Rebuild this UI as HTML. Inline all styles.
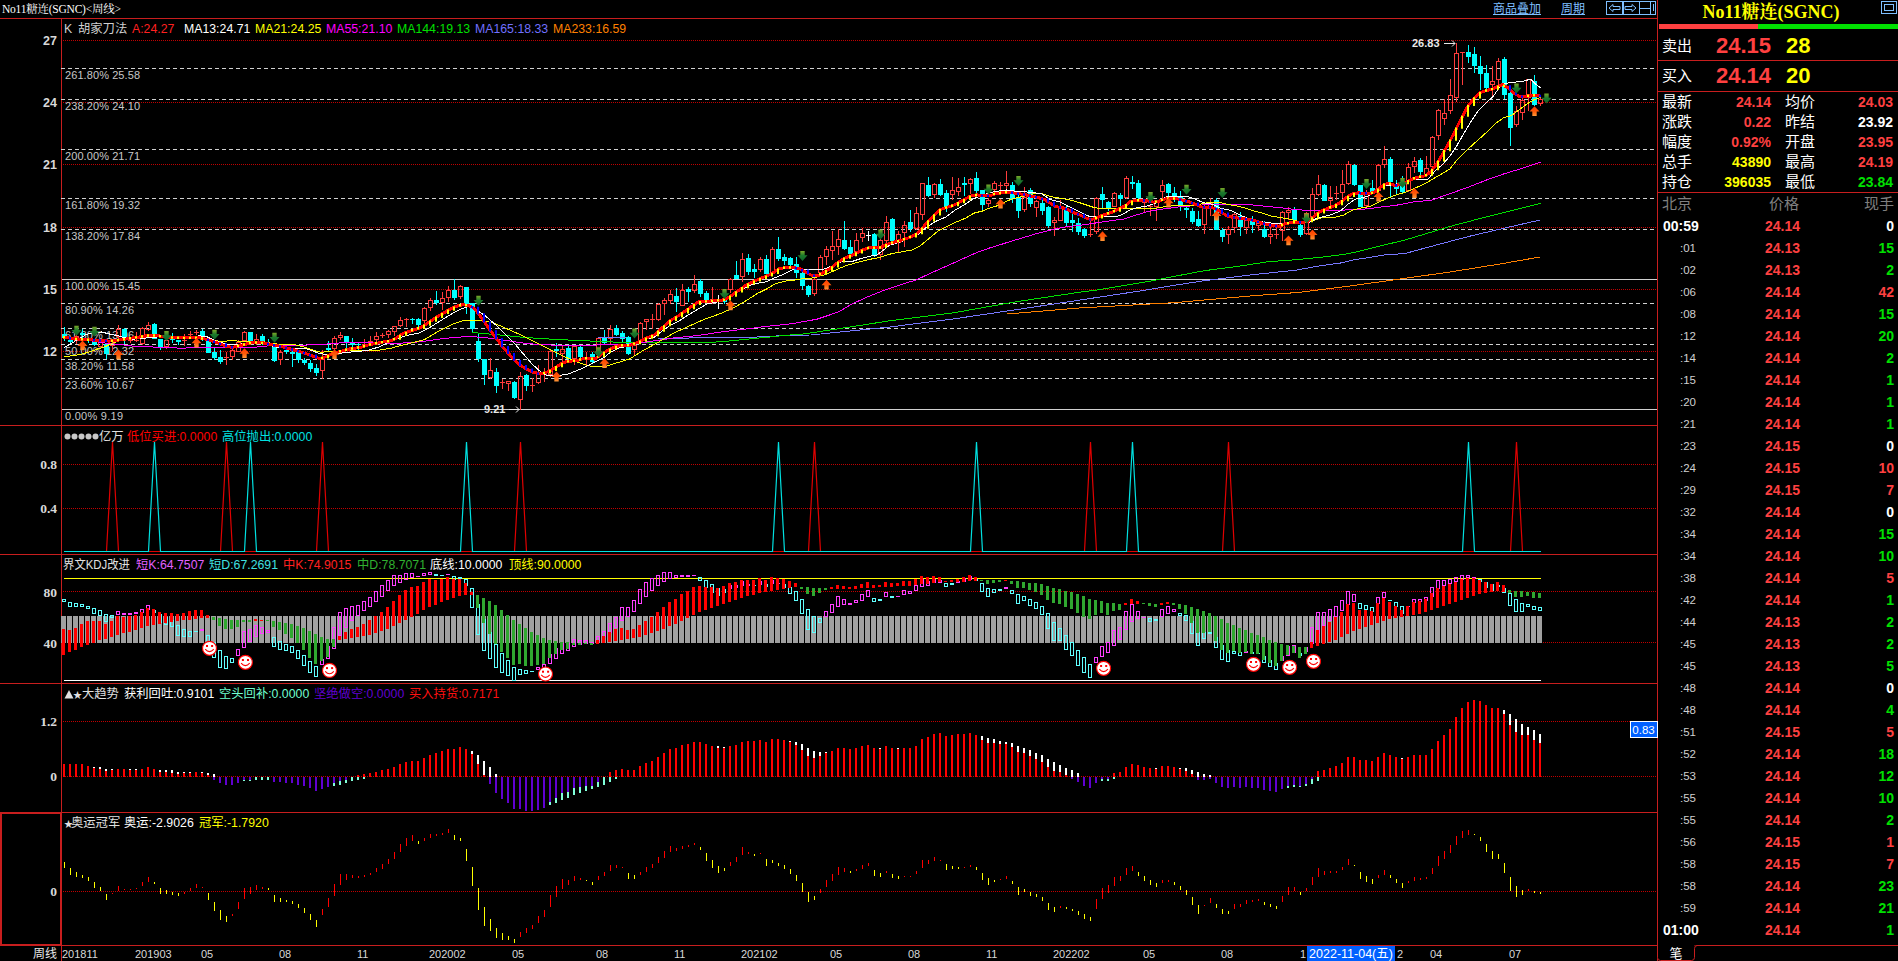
<!DOCTYPE html><html><head><meta charset="utf-8"><title>No11糖连(SGNC)</title><style>
html,body{margin:0;padding:0;background:#000;overflow:hidden}
body{width:1898px;height:961px;position:relative;font-family:"Liberation Sans","Noto Sans CJK SC",sans-serif;color:#fff}
svg{position:absolute;left:0;top:0}
text{font-family:"Liberation Sans","Noto Sans CJK SC",sans-serif}
.t{position:absolute;white-space:nowrap;line-height:1}
</style></head><body>
<svg width="1898" height="961" viewBox="0 0 1898 961">
<rect x="0" y="0" width="1898" height="961" fill="#000"/>
<line x1="0" y1="18.5" x2="1657" y2="18.5" stroke="#c81e1e" stroke-width="1" shape-rendering="crispEdges"/>
<line x1="0" y1="425.5" x2="1657" y2="425.5" stroke="#c81e1e" stroke-width="1" shape-rendering="crispEdges"/>
<line x1="0" y1="554.5" x2="1657" y2="554.5" stroke="#c81e1e" stroke-width="1" shape-rendering="crispEdges"/>
<line x1="0" y1="683.5" x2="1657" y2="683.5" stroke="#c81e1e" stroke-width="1" shape-rendering="crispEdges"/>
<line x1="0" y1="812.5" x2="1657" y2="812.5" stroke="#c81e1e" stroke-width="1" shape-rendering="crispEdges"/>
<line x1="0" y1="945.5" x2="1657" y2="945.5" stroke="#c81e1e" stroke-width="1" shape-rendering="crispEdges"/>
<line x1="61.5" y1="18" x2="61.5" y2="961" stroke="#c81e1e" stroke-width="1" shape-rendering="crispEdges"/>
<line x1="1657.5" y1="0" x2="1657.5" y2="961" stroke="#c81e1e" stroke-width="1" shape-rendering="crispEdges"/>
<text x="2" y="13" font-size="11.5" fill="#fff" text-anchor="start" font-weight="normal" style="font-family:'Liberation Serif','Noto Serif CJK SC',serif" textLength="119" lengthAdjust="spacing">No11糖连(SGNC)&lt;周线&gt;</text>
<text x="1493" y="13" font-size="12" fill="#7fbfff" text-anchor="start" font-weight="normal">商品叠加</text>
<text x="1561" y="13" font-size="12" fill="#7fbfff" text-anchor="start" font-weight="normal">周期</text>
<line x1="1493" y1="14.5" x2="1541" y2="14.5" stroke="#7fbfff" stroke-width="1" shape-rendering="crispEdges"/>
<line x1="1561" y1="14.5" x2="1585" y2="14.5" stroke="#7fbfff" stroke-width="1" shape-rendering="crispEdges"/>
<rect x="1606.5" y="1.5" width="16" height="13" fill="none" stroke="#7fbfff" stroke-width="1" shape-rendering="crispEdges"/>
<rect x="1623.0" y="1.5" width="16" height="13" fill="none" stroke="#7fbfff" stroke-width="1" shape-rendering="crispEdges"/>
<rect x="1639.5" y="1.5" width="16" height="13" fill="none" stroke="#7fbfff" stroke-width="1" shape-rendering="crispEdges"/>
<path d="M1609 8 l4 -3.5 v2 h7 v3 h-7 v2 z" fill="none" stroke="#7fbfff" stroke-width="1"/>
<path d="M1636 8 l-4 -3.5 v2 h-7 v3 h7 v2 z" fill="none" stroke="#7fbfff" stroke-width="1"/>
<path d="M1640 8.5 h10 M1650.5 2 v12 M1653.5 4 v7" fill="none" stroke="#7fbfff" stroke-width="1" shape-rendering="crispEdges"/>
<line x1="63" y1="40.5" x2="1657" y2="40.5" stroke="#c00000" stroke-width="1" stroke-dasharray="1 1" shape-rendering="crispEdges"/>
<text x="57" y="44.5" font-size="12.5" fill="#d8d8d8" text-anchor="end" font-weight="bold">27</text>
<line x1="63" y1="102.5" x2="1657" y2="102.5" stroke="#c00000" stroke-width="1" stroke-dasharray="1 1" shape-rendering="crispEdges"/>
<text x="57" y="106.5" font-size="12.5" fill="#d8d8d8" text-anchor="end" font-weight="bold">24</text>
<line x1="63" y1="164.5" x2="1657" y2="164.5" stroke="#c00000" stroke-width="1" stroke-dasharray="1 1" shape-rendering="crispEdges"/>
<text x="57" y="168.5" font-size="12.5" fill="#d8d8d8" text-anchor="end" font-weight="bold">21</text>
<line x1="63" y1="227.5" x2="1657" y2="227.5" stroke="#c00000" stroke-width="1" stroke-dasharray="1 1" shape-rendering="crispEdges"/>
<text x="57" y="231.5" font-size="12.5" fill="#d8d8d8" text-anchor="end" font-weight="bold">18</text>
<line x1="63" y1="289.5" x2="1657" y2="289.5" stroke="#c00000" stroke-width="1" stroke-dasharray="1 1" shape-rendering="crispEdges"/>
<text x="57" y="293.5" font-size="12.5" fill="#d8d8d8" text-anchor="end" font-weight="bold">15</text>
<line x1="63" y1="351.5" x2="1657" y2="351.5" stroke="#c00000" stroke-width="1" stroke-dasharray="1 1" shape-rendering="crispEdges"/>
<text x="57" y="355.5" font-size="12.5" fill="#d8d8d8" text-anchor="end" font-weight="bold">12</text>
<line x1="61" y1="68.5" x2="1657" y2="68.5" stroke="#d0d0d0" stroke-width="1" stroke-dasharray="4 3" shape-rendering="crispEdges"/>
<text x="65" y="79" font-size="11" fill="#c8c8c8" text-anchor="start" font-weight="normal" textLength="75" lengthAdjust="spacing">261.80% 25.58</text>
<line x1="61" y1="99.5" x2="1657" y2="99.5" stroke="#d0d0d0" stroke-width="1" stroke-dasharray="4 3" shape-rendering="crispEdges"/>
<text x="65" y="110" font-size="11" fill="#c8c8c8" text-anchor="start" font-weight="normal" textLength="75" lengthAdjust="spacing">238.20% 24.10</text>
<line x1="61" y1="149.5" x2="1657" y2="149.5" stroke="#d0d0d0" stroke-width="1" stroke-dasharray="4 3" shape-rendering="crispEdges"/>
<text x="65" y="160" font-size="11" fill="#c8c8c8" text-anchor="start" font-weight="normal" textLength="75" lengthAdjust="spacing">200.00% 21.71</text>
<line x1="61" y1="198.5" x2="1657" y2="198.5" stroke="#d0d0d0" stroke-width="1" stroke-dasharray="4 3" shape-rendering="crispEdges"/>
<text x="65" y="209" font-size="11" fill="#c8c8c8" text-anchor="start" font-weight="normal" textLength="75" lengthAdjust="spacing">161.80% 19.32</text>
<line x1="61" y1="229.5" x2="1657" y2="229.5" stroke="#d0d0d0" stroke-width="1" stroke-dasharray="4 3" shape-rendering="crispEdges"/>
<text x="65" y="240" font-size="11" fill="#c8c8c8" text-anchor="start" font-weight="normal" textLength="75" lengthAdjust="spacing">138.20% 17.84</text>
<line x1="62" y1="279.5" x2="1657" y2="279.5" stroke="#d0d0d0" stroke-width="1" shape-rendering="crispEdges"/>
<text x="65" y="290" font-size="11" fill="#c8c8c8" text-anchor="start" font-weight="normal" textLength="75" lengthAdjust="spacing">100.00% 15.45</text>
<line x1="61" y1="303.5" x2="1657" y2="303.5" stroke="#d0d0d0" stroke-width="1" stroke-dasharray="4 3" shape-rendering="crispEdges"/>
<text x="65" y="314" font-size="11" fill="#c8c8c8" text-anchor="start" font-weight="normal" textLength="69" lengthAdjust="spacing">80.90% 14.26</text>
<line x1="61" y1="328.5" x2="1657" y2="328.5" stroke="#d0d0d0" stroke-width="1" stroke-dasharray="4 3" shape-rendering="crispEdges"/>
<text x="65" y="339" font-size="11" fill="#c8c8c8" text-anchor="start" font-weight="normal" textLength="69" lengthAdjust="spacing">61.80% 13.06</text>
<line x1="61" y1="344.5" x2="1657" y2="344.5" stroke="#d0d0d0" stroke-width="1" stroke-dasharray="4 3" shape-rendering="crispEdges"/>
<text x="65" y="355" font-size="11" fill="#c8c8c8" text-anchor="start" font-weight="normal" textLength="69" lengthAdjust="spacing">50.00% 12.32</text>
<line x1="61" y1="359.5" x2="1657" y2="359.5" stroke="#d0d0d0" stroke-width="1" stroke-dasharray="4 3" shape-rendering="crispEdges"/>
<text x="65" y="370" font-size="11" fill="#c8c8c8" text-anchor="start" font-weight="normal" textLength="69" lengthAdjust="spacing">38.20% 11.58</text>
<line x1="61" y1="378.5" x2="1657" y2="378.5" stroke="#d0d0d0" stroke-width="1" stroke-dasharray="4 3" shape-rendering="crispEdges"/>
<text x="65" y="389" font-size="11" fill="#c8c8c8" text-anchor="start" font-weight="normal" textLength="69" lengthAdjust="spacing">23.60% 10.67</text>
<line x1="62" y1="409.5" x2="1657" y2="409.5" stroke="#d0d0d0" stroke-width="1" shape-rendering="crispEdges"/>
<text x="65" y="420" font-size="11" fill="#c8c8c8" text-anchor="start" font-weight="normal" textLength="58" lengthAdjust="spacing">0.00% 9.19</text>
<text x="64" y="33" font-size="12.3" fill="#d0d0d0" text-anchor="start" font-weight="normal">K</text>
<text x="78" y="33" font-size="12.3" fill="#d0d0d0" text-anchor="start" font-weight="normal">胡家刀法</text>
<text x="132" y="33" font-size="12.3" fill="#ff2020" text-anchor="start" font-weight="normal">A:24.27</text>
<text x="184" y="33" font-size="12.3" fill="#ffffff" text-anchor="start" font-weight="normal">MA13:24.71</text>
<text x="255" y="33" font-size="12.3" fill="#ffff00" text-anchor="start" font-weight="normal">MA21:24.25</text>
<text x="326" y="33" font-size="12.3" fill="#ff00ff" text-anchor="start" font-weight="normal">MA55:21.10</text>
<text x="397" y="33" font-size="12.3" fill="#00e000" text-anchor="start" font-weight="normal">MA144:19.13</text>
<text x="475" y="33" font-size="12.3" fill="#7070ff" text-anchor="start" font-weight="normal">MA165:18.33</text>
<text x="553" y="33" font-size="12.3" fill="#ff8000" text-anchor="start" font-weight="normal">MA233:16.59</text>
<rect x="62" y="334" width="5" height="4" fill="#00ffff" shape-rendering="crispEdges"/>
<rect x="68" y="340" width="5" height="2" fill="#00ffff" shape-rendering="crispEdges"/>
<rect x="80" y="333" width="5" height="2" fill="#00ffff" shape-rendering="crispEdges"/>
<rect x="86" y="340" width="5" height="1" fill="#00ffff" shape-rendering="crispEdges"/>
<rect x="92" y="340" width="5" height="5" fill="#00ffff" shape-rendering="crispEdges"/>
<rect x="104" y="344" width="5" height="10" fill="#00ffff" shape-rendering="crispEdges"/>
<rect x="122" y="329" width="5" height="10" fill="#00ffff" shape-rendering="crispEdges"/>
<rect x="152" y="324" width="5" height="15" fill="#00ffff" shape-rendering="crispEdges"/>
<rect x="158" y="339" width="5" height="8" fill="#00ffff" shape-rendering="crispEdges"/>
<rect x="170" y="338" width="5" height="2" fill="#00ffff" shape-rendering="crispEdges"/>
<rect x="176" y="340" width="5" height="2" fill="#00ffff" shape-rendering="crispEdges"/>
<rect x="200" y="331" width="5" height="5" fill="#00ffff" shape-rendering="crispEdges"/>
<rect x="206" y="340" width="5" height="13" fill="#00ffff" shape-rendering="crispEdges"/>
<rect x="212" y="352" width="5" height="6" fill="#00ffff" shape-rendering="crispEdges"/>
<rect x="218" y="357" width="5" height="5" fill="#00ffff" shape-rendering="crispEdges"/>
<rect x="248" y="332" width="5" height="10" fill="#00ffff" shape-rendering="crispEdges"/>
<rect x="260" y="336" width="5" height="6" fill="#00ffff" shape-rendering="crispEdges"/>
<rect x="266" y="343" width="5" height="1" fill="#00ffff" shape-rendering="crispEdges"/>
<rect x="272" y="347" width="5" height="14" fill="#00ffff" shape-rendering="crispEdges"/>
<rect x="284" y="350" width="5" height="2" fill="#00ffff" shape-rendering="crispEdges"/>
<rect x="290" y="352" width="5" height="2" fill="#00ffff" shape-rendering="crispEdges"/>
<rect x="296" y="352" width="5" height="8" fill="#00ffff" shape-rendering="crispEdges"/>
<rect x="302" y="360" width="5" height="3" fill="#00ffff" shape-rendering="crispEdges"/>
<rect x="308" y="363" width="5" height="6" fill="#00ffff" shape-rendering="crispEdges"/>
<rect x="314" y="368" width="5" height="5" fill="#00ffff" shape-rendering="crispEdges"/>
<rect x="326" y="348" width="5" height="2" fill="#00ffff" shape-rendering="crispEdges"/>
<rect x="344" y="336" width="5" height="6" fill="#00ffff" shape-rendering="crispEdges"/>
<rect x="350" y="343" width="5" height="2" fill="#00ffff" shape-rendering="crispEdges"/>
<rect x="356" y="344" width="5" height="1" fill="#00ffff" shape-rendering="crispEdges"/>
<rect x="410" y="319" width="5" height="1" fill="#00ffff" shape-rendering="crispEdges"/>
<rect x="416" y="319" width="5" height="6" fill="#00ffff" shape-rendering="crispEdges"/>
<rect x="434" y="300" width="5" height="3" fill="#00ffff" shape-rendering="crispEdges"/>
<rect x="452" y="290" width="5" height="8" fill="#00ffff" shape-rendering="crispEdges"/>
<rect x="464" y="287" width="5" height="17" fill="#00ffff" shape-rendering="crispEdges"/>
<rect x="470" y="303" width="5" height="26" fill="#00ffff" shape-rendering="crispEdges"/>
<rect x="476" y="341" width="5" height="18" fill="#00ffff" shape-rendering="crispEdges"/>
<rect x="482" y="359" width="5" height="16" fill="#00ffff" shape-rendering="crispEdges"/>
<rect x="494" y="372" width="5" height="14" fill="#00ffff" shape-rendering="crispEdges"/>
<rect x="512" y="382" width="5" height="16" fill="#00ffff" shape-rendering="crispEdges"/>
<rect x="524" y="375" width="5" height="11" fill="#00ffff" shape-rendering="crispEdges"/>
<rect x="554" y="349" width="5" height="2" fill="#00ffff" shape-rendering="crispEdges"/>
<rect x="566" y="348" width="5" height="11" fill="#00ffff" shape-rendering="crispEdges"/>
<rect x="578" y="347" width="5" height="10" fill="#00ffff" shape-rendering="crispEdges"/>
<rect x="590" y="354" width="5" height="8" fill="#00ffff" shape-rendering="crispEdges"/>
<rect x="602" y="337" width="5" height="6" fill="#00ffff" shape-rendering="crispEdges"/>
<rect x="614" y="328" width="5" height="7" fill="#00ffff" shape-rendering="crispEdges"/>
<rect x="620" y="333" width="5" height="6" fill="#00ffff" shape-rendering="crispEdges"/>
<rect x="626" y="337" width="5" height="17" fill="#00ffff" shape-rendering="crispEdges"/>
<rect x="674" y="296" width="5" height="6" fill="#00ffff" shape-rendering="crispEdges"/>
<rect x="686" y="289" width="5" height="3" fill="#00ffff" shape-rendering="crispEdges"/>
<rect x="698" y="281" width="5" height="13" fill="#00ffff" shape-rendering="crispEdges"/>
<rect x="704" y="293" width="5" height="7" fill="#00ffff" shape-rendering="crispEdges"/>
<rect x="722" y="300" width="5" height="2" fill="#00ffff" shape-rendering="crispEdges"/>
<rect x="734" y="275" width="5" height="4" fill="#00ffff" shape-rendering="crispEdges"/>
<rect x="746" y="258" width="5" height="14" fill="#00ffff" shape-rendering="crispEdges"/>
<rect x="752" y="269" width="5" height="3" fill="#00ffff" shape-rendering="crispEdges"/>
<rect x="764" y="259" width="5" height="15" fill="#00ffff" shape-rendering="crispEdges"/>
<rect x="776" y="249" width="5" height="10" fill="#00ffff" shape-rendering="crispEdges"/>
<rect x="782" y="257" width="5" height="4" fill="#00ffff" shape-rendering="crispEdges"/>
<rect x="788" y="258" width="5" height="7" fill="#00ffff" shape-rendering="crispEdges"/>
<rect x="794" y="264" width="5" height="9" fill="#00ffff" shape-rendering="crispEdges"/>
<rect x="800" y="273" width="5" height="13" fill="#00ffff" shape-rendering="crispEdges"/>
<rect x="806" y="286" width="5" height="9" fill="#00ffff" shape-rendering="crispEdges"/>
<rect x="842" y="240" width="5" height="9" fill="#00ffff" shape-rendering="crispEdges"/>
<rect x="848" y="247" width="5" height="7" fill="#00ffff" shape-rendering="crispEdges"/>
<rect x="872" y="234" width="5" height="22" fill="#00ffff" shape-rendering="crispEdges"/>
<rect x="890" y="219" width="5" height="22" fill="#00ffff" shape-rendering="crispEdges"/>
<rect x="908" y="222" width="5" height="7" fill="#00ffff" shape-rendering="crispEdges"/>
<rect x="926" y="185" width="5" height="11" fill="#00ffff" shape-rendering="crispEdges"/>
<rect x="938" y="184" width="5" height="11" fill="#00ffff" shape-rendering="crispEdges"/>
<rect x="944" y="193" width="5" height="15" fill="#00ffff" shape-rendering="crispEdges"/>
<rect x="962" y="183" width="5" height="2" fill="#00ffff" shape-rendering="crispEdges"/>
<rect x="974" y="178" width="5" height="13" fill="#00ffff" shape-rendering="crispEdges"/>
<rect x="980" y="190" width="5" height="15" fill="#00ffff" shape-rendering="crispEdges"/>
<rect x="1010" y="185" width="5" height="14" fill="#00ffff" shape-rendering="crispEdges"/>
<rect x="1016" y="197" width="5" height="14" fill="#00ffff" shape-rendering="crispEdges"/>
<rect x="1028" y="190" width="5" height="14" fill="#00ffff" shape-rendering="crispEdges"/>
<rect x="1040" y="203" width="5" height="8" fill="#00ffff" shape-rendering="crispEdges"/>
<rect x="1046" y="207" width="5" height="19" fill="#00ffff" shape-rendering="crispEdges"/>
<rect x="1064" y="210" width="5" height="13" fill="#00ffff" shape-rendering="crispEdges"/>
<rect x="1070" y="220" width="5" height="3" fill="#00ffff" shape-rendering="crispEdges"/>
<rect x="1076" y="223" width="5" height="9" fill="#00ffff" shape-rendering="crispEdges"/>
<rect x="1082" y="229" width="5" height="7" fill="#00ffff" shape-rendering="crispEdges"/>
<rect x="1100" y="194" width="5" height="6" fill="#00ffff" shape-rendering="crispEdges"/>
<rect x="1106" y="202" width="5" height="6" fill="#00ffff" shape-rendering="crispEdges"/>
<rect x="1118" y="195" width="5" height="4" fill="#00ffff" shape-rendering="crispEdges"/>
<rect x="1130" y="182" width="5" height="2" fill="#00ffff" shape-rendering="crispEdges"/>
<rect x="1136" y="183" width="5" height="15" fill="#00ffff" shape-rendering="crispEdges"/>
<rect x="1166" y="184" width="5" height="9" fill="#00ffff" shape-rendering="crispEdges"/>
<rect x="1172" y="193" width="5" height="3" fill="#00ffff" shape-rendering="crispEdges"/>
<rect x="1178" y="196" width="5" height="9" fill="#00ffff" shape-rendering="crispEdges"/>
<rect x="1184" y="208" width="5" height="2" fill="#00ffff" shape-rendering="crispEdges"/>
<rect x="1190" y="211" width="5" height="11" fill="#00ffff" shape-rendering="crispEdges"/>
<rect x="1196" y="219" width="5" height="7" fill="#00ffff" shape-rendering="crispEdges"/>
<rect x="1214" y="200" width="5" height="30" fill="#00ffff" shape-rendering="crispEdges"/>
<rect x="1220" y="230" width="5" height="7" fill="#00ffff" shape-rendering="crispEdges"/>
<rect x="1238" y="216" width="5" height="11" fill="#00ffff" shape-rendering="crispEdges"/>
<rect x="1250" y="219" width="5" height="6" fill="#00ffff" shape-rendering="crispEdges"/>
<rect x="1262" y="229" width="5" height="8" fill="#00ffff" shape-rendering="crispEdges"/>
<rect x="1292" y="210" width="5" height="10" fill="#00ffff" shape-rendering="crispEdges"/>
<rect x="1298" y="225" width="5" height="10" fill="#00ffff" shape-rendering="crispEdges"/>
<rect x="1322" y="185" width="5" height="16" fill="#00ffff" shape-rendering="crispEdges"/>
<rect x="1352" y="165" width="5" height="20" fill="#00ffff" shape-rendering="crispEdges"/>
<rect x="1358" y="185" width="5" height="22" fill="#00ffff" shape-rendering="crispEdges"/>
<rect x="1370" y="188" width="5" height="5" fill="#00ffff" shape-rendering="crispEdges"/>
<rect x="1388" y="159" width="5" height="23" fill="#00ffff" shape-rendering="crispEdges"/>
<rect x="1394" y="184" width="5" height="5" fill="#00ffff" shape-rendering="crispEdges"/>
<rect x="1400" y="185" width="5" height="7" fill="#00ffff" shape-rendering="crispEdges"/>
<rect x="1418" y="160" width="5" height="12" fill="#00ffff" shape-rendering="crispEdges"/>
<rect x="1466" y="52" width="5" height="5" fill="#00ffff" shape-rendering="crispEdges"/>
<rect x="1472" y="54" width="5" height="12" fill="#00ffff" shape-rendering="crispEdges"/>
<rect x="1478" y="66" width="5" height="8" fill="#00ffff" shape-rendering="crispEdges"/>
<rect x="1484" y="73" width="5" height="15" fill="#00ffff" shape-rendering="crispEdges"/>
<rect x="1502" y="59" width="5" height="36" fill="#00ffff" shape-rendering="crispEdges"/>
<rect x="1508" y="93" width="5" height="35" fill="#00ffff" shape-rendering="crispEdges"/>
<rect x="1532" y="81" width="5" height="24" fill="#00ffff" shape-rendering="crispEdges"/>
<path d="M64.5 327V334M64.5 338V341M70.5 339V340M70.5 342V343M82.5 329V333M82.5 335V341M88.5 338V340M88.5 341V343M94.5 345V346M106.5 354V359M124.5 328V329M124.5 339V344M154.5 323V324M160.5 347V350M172.5 333V338M172.5 340V343M178.5 342V345M202.5 329V331M202.5 336V341M214.5 348V352M214.5 358V360M220.5 350V357M220.5 362V364M250.5 342V343M262.5 334V336M262.5 342V345M268.5 339V343M268.5 344V345M274.5 361V362M286.5 348V350M286.5 352V354M292.5 350V352M292.5 354V367M298.5 350V352M298.5 360V363M304.5 358V360M304.5 363V365M310.5 360V363M310.5 369V372M316.5 364V368M316.5 373V376M328.5 341V348M328.5 350V352M346.5 342V348M352.5 338V343M352.5 345V347M358.5 343V344M358.5 345V351M412.5 318V319M412.5 320V324M418.5 318V319M418.5 325V330M436.5 291V300M436.5 303V305M454.5 279V290M454.5 298V300M466.5 304V314M472.5 329V333M478.5 333V341M478.5 359V362M484.5 375V385M496.5 368V372M496.5 386V393M514.5 381V382M514.5 398V399M526.5 374V375M526.5 386V391M556.5 343V349M556.5 351V357M568.5 346V348M568.5 359V360M580.5 346V347M580.5 357V358M592.5 352V354M592.5 362V363M604.5 330V337M604.5 343V344M616.5 325V328M616.5 335V336M622.5 331V333M622.5 339V343M628.5 336V337M628.5 354V355M676.5 288V296M676.5 302V312M688.5 287V289M688.5 292V302M700.5 279V281M700.5 294V297M706.5 291V293M706.5 300V301M724.5 298V300M724.5 302V304M736.5 261V275M748.5 254V258M748.5 272V275M754.5 264V269M754.5 272V278M766.5 255V259M766.5 274V275M778.5 237V249M778.5 259V261M784.5 254V257M784.5 261V265M790.5 257V258M790.5 265V266M796.5 257V264M796.5 273V278M802.5 269V273M802.5 286V290M808.5 285V286M808.5 295V297M844.5 221V240M844.5 249V250M850.5 240V247M850.5 254V255M874.5 233V234M874.5 256V257M892.5 218V219M892.5 241V244M910.5 210V222M910.5 229V232M928.5 177V185M928.5 196V197M940.5 179V184M940.5 195V196M946.5 190V193M946.5 208V212M964.5 177V183M964.5 185V196M976.5 172V178M976.5 191V193M982.5 205V211M1012.5 182V185M1012.5 199V203M1018.5 195V197M1018.5 211V218M1030.5 188V190M1030.5 204V207M1042.5 198V203M1042.5 211V215M1048.5 206V207M1048.5 226V228M1066.5 206V210M1066.5 223V226M1072.5 214V220M1072.5 223V232M1078.5 218V223M1078.5 232V235M1084.5 228V229M1084.5 236V238M1102.5 187V194M1102.5 200V208M1108.5 201V202M1108.5 208V211M1120.5 193V195M1120.5 199V208M1132.5 176V182M1132.5 184V189M1138.5 180V183M1138.5 198V199M1168.5 183V184M1168.5 193V196M1174.5 187V193M1174.5 196V202M1180.5 191V196M1180.5 205V211M1186.5 207V208M1186.5 210V218M1192.5 208V211M1192.5 222V224M1198.5 211V219M1198.5 226V227M1216.5 198V200M1222.5 228V230M1222.5 237V242M1240.5 212V216M1240.5 227V236M1252.5 216V219M1252.5 225V233M1264.5 221V229M1264.5 237V238M1294.5 207V210M1300.5 223V225M1300.5 235V237M1324.5 184V185M1354.5 164V165M1354.5 185V186M1372.5 180V188M1372.5 193V194M1390.5 157V159M1390.5 182V197M1396.5 180V184M1396.5 189V194M1402.5 176V185M1402.5 192V193M1420.5 158V160M1420.5 172V175M1468.5 45V52M1468.5 57V63M1474.5 47V54M1474.5 66V73M1480.5 56V66M1480.5 74V90M1486.5 65V73M1486.5 88V90M1504.5 57V59M1504.5 95V99M1510.5 86V93M1510.5 128V146M1534.5 75V81M1534.5 105V106" stroke="#00ffff" stroke-width="1" fill="none" shape-rendering="crispEdges"/>
<path d="M74.5 336.5H78.5V340.5H74.5ZM76.5 335V336M76.5 341V344M98.5 342.5H102.5V346.5H98.5ZM100.5 341V342M110.5 343.5H114.5V345.5H110.5ZM112.5 342V343M112.5 346V351M116.5 329.5H120.5V336.5H116.5ZM118.5 325V329M118.5 337V339M128 340.5H133M130.5 339V343M134 340.5H139M136.5 332V342M140.5 328.5H144.5V343.5H140.5ZM142.5 327V328M142.5 344V345M146.5 325.5H150.5V329.5H146.5ZM148.5 322V325M148.5 330V331M164.5 340.5H168.5V346.5H164.5ZM166.5 339V340M166.5 347V349M182 340.5H187M184.5 334V346M188 334.5H193M190.5 331V338M194 332.5H199M196.5 330V335M224 357.5H229M226.5 352V365M230.5 350.5H234.5V356.5H230.5ZM232.5 348V350M232.5 357V360M236.5 342.5H240.5V351.5H236.5ZM238.5 340V342M242.5 332.5H246.5V340.5H242.5ZM244.5 331V332M244.5 341V342M254.5 339.5H258.5V343.5H254.5ZM256.5 334V339M256.5 344V345M278.5 352.5H282.5V359.5H278.5ZM280.5 350V352M280.5 360V365M320.5 359.5H324.5V370.5H320.5ZM322.5 350V359M322.5 371V379M332.5 338.5H336.5V348.5H332.5ZM334.5 336V338M334.5 349V352M338.5 335.5H342.5V337.5H338.5ZM340.5 332V335M340.5 338V340M362 344.5H367M364.5 339V346M368 341.5H373M370.5 336V343M374.5 336.5H378.5V339.5H374.5ZM376.5 332V336M376.5 340V342M380 335.5H385M382.5 333V338M386.5 331.5H390.5V334.5H386.5ZM388.5 330V331M388.5 335V338M392.5 326.5H396.5V331.5H392.5ZM394.5 332V336M398.5 320.5H402.5V325.5H398.5ZM400.5 317V320M400.5 326V327M404 319.5H409M406.5 318V327M422.5 308.5H426.5V320.5H422.5ZM424.5 307V308M424.5 321V324M428.5 300.5H432.5V307.5H428.5ZM430.5 298V300M430.5 308V311M440.5 298.5H444.5V302.5H440.5ZM442.5 292V298M442.5 303V310M446.5 290.5H450.5V297.5H446.5ZM448.5 286V290M448.5 298V302M458.5 286.5H462.5V296.5H458.5ZM460.5 285V286M460.5 297V299M488.5 370.5H492.5V377.5H488.5ZM490.5 358V370M490.5 378V379M500 382.5H505M502.5 379V389M506.5 381.5H510.5V383.5H506.5ZM508.5 384V391M518.5 376.5H522.5V399.5H518.5ZM520.5 372V376M520.5 400V410M530 385.5H535M532.5 378V392M536.5 374.5H540.5V382.5H536.5ZM538.5 365V374M538.5 383V384M542 374.5H547M544.5 368V382M548.5 351.5H552.5V374.5H548.5ZM550.5 350V351M550.5 375V377M560.5 349.5H564.5V353.5H560.5ZM562.5 345V349M562.5 354V362M572.5 346.5H576.5V358.5H572.5ZM574.5 359V365M584 357.5H589M586.5 352V365M596.5 338.5H600.5V354.5H596.5ZM598.5 337V338M598.5 355V357M608.5 329.5H612.5V338.5H608.5ZM610.5 325V329M610.5 339V344M632.5 345.5H636.5V349.5H632.5ZM634.5 344V345M634.5 350V356M638.5 323.5H642.5V340.5H638.5ZM640.5 322V323M640.5 341V343M644.5 319.5H648.5V321.5H644.5ZM646.5 322V330M650 319.5H655M652.5 314V329M656.5 304.5H660.5V319.5H656.5ZM658.5 303V304M658.5 320V321M662.5 300.5H666.5V303.5H662.5ZM664.5 298V300M664.5 304V315M668.5 294.5H672.5V300.5H668.5ZM670.5 290V294M670.5 301V304M680.5 290.5H684.5V305.5H680.5ZM682.5 284V290M692.5 284.5H696.5V290.5H692.5ZM694.5 275V284M694.5 291V293M710.5 299.5H714.5V301.5H710.5ZM712.5 287V299M712.5 302V304M728.5 279.5H732.5V289.5H728.5ZM730.5 278V279M730.5 290V293M740.5 259.5H744.5V276.5H740.5ZM742.5 253V259M742.5 277V282M758.5 259.5H762.5V269.5H758.5ZM760.5 257V259M760.5 270V272M770.5 249.5H774.5V272.5H770.5ZM772.5 247V249M772.5 273V274M812.5 279.5H816.5V293.5H812.5ZM814.5 277V279M814.5 294V296M818.5 257.5H822.5V272.5H818.5ZM820.5 255V257M820.5 273V276M824.5 249.5H828.5V256.5H824.5ZM826.5 246V249M826.5 257V265M830.5 246.5H834.5V250.5H830.5ZM832.5 231V246M832.5 251V260M836.5 239.5H840.5V246.5H836.5ZM838.5 229V239M838.5 247V255M854.5 240.5H858.5V251.5H854.5ZM856.5 233V240M856.5 252V254M860.5 233.5H864.5V237.5H860.5ZM862.5 228V233M862.5 238V242M878.5 240.5H882.5V254.5H878.5ZM880.5 239V240M880.5 255V260M884.5 222.5H888.5V240.5H884.5ZM886.5 216V222M886.5 241V243M896.5 234.5H900.5V242.5H896.5ZM898.5 231V234M898.5 243V252M902.5 225.5H906.5V232.5H902.5ZM904.5 221V225M904.5 233V247M914.5 213.5H918.5V228.5H914.5ZM916.5 207V213M916.5 229V230M920.5 183.5H924.5V214.5H920.5ZM922.5 215V220M932.5 184.5H936.5V194.5H932.5ZM934.5 183V184M934.5 195V198M950.5 190.5H954.5V194.5H950.5ZM952.5 177V190M952.5 195V200M956.5 187.5H960.5V191.5H956.5ZM958.5 178V187M958.5 192V196M968.5 179.5H972.5V183.5H968.5ZM970.5 178V179M970.5 184V194M986.5 200.5H990.5V203.5H986.5ZM988.5 198V200M988.5 204V207M992.5 183.5H996.5V189.5H992.5ZM994.5 181V183M994.5 190V194M998 185.5H1003M1000.5 182V194M1004.5 183.5H1008.5V185.5H1004.5ZM1006.5 171V183M1006.5 186V189M1022.5 197.5H1026.5V209.5H1022.5ZM1024.5 187V197M1024.5 210V212M1034.5 201.5H1038.5V207.5H1034.5ZM1036.5 200V201M1036.5 208V217M1052.5 220.5H1056.5V222.5H1052.5ZM1054.5 217V220M1054.5 223V236M1058.5 206.5H1062.5V220.5H1058.5ZM1060.5 200V206M1088 234.5H1093M1090.5 218V237M1094.5 198.5H1098.5V231.5H1094.5ZM1096.5 197V198M1096.5 232V234M1112.5 193.5H1116.5V206.5H1112.5ZM1114.5 192V193M1124.5 178.5H1128.5V197.5H1124.5ZM1126.5 176V178M1126.5 198V199M1142 202.5H1147M1144.5 200V213M1148 206.5H1153M1150.5 204V216M1154.5 201.5H1158.5V206.5H1154.5ZM1156.5 200V201M1156.5 207V221M1160.5 185.5H1164.5V191.5H1160.5ZM1162.5 180V185M1162.5 192V198M1202.5 207.5H1206.5V224.5H1202.5ZM1204.5 205V207M1204.5 225V234M1208.5 203.5H1212.5V206.5H1208.5ZM1210.5 198V203M1210.5 207V216M1226.5 229.5H1230.5V234.5H1226.5ZM1228.5 226V229M1228.5 235V244M1232.5 214.5H1236.5V227.5H1232.5ZM1234.5 212V214M1234.5 228V233M1244.5 220.5H1248.5V227.5H1244.5ZM1246.5 218V220M1246.5 228V234M1256.5 223.5H1260.5V225.5H1256.5ZM1258.5 222V223M1258.5 226V231M1268.5 234.5H1272.5V236.5H1268.5ZM1270.5 225V234M1270.5 237V244M1274 234.5H1279M1276.5 225V239M1280.5 212.5H1284.5V230.5H1280.5ZM1282.5 211V212M1282.5 231V241M1286.5 210.5H1290.5V212.5H1286.5ZM1288.5 207V210M1288.5 213V220M1304.5 213.5H1308.5V233.5H1304.5ZM1306.5 212V213M1306.5 234V235M1310.5 194.5H1314.5V216.5H1310.5ZM1312.5 188V194M1312.5 217V219M1316.5 184.5H1320.5V194.5H1316.5ZM1318.5 175V184M1318.5 195V196M1328.5 197.5H1332.5V200.5H1328.5ZM1330.5 186V197M1330.5 201V206M1334 193.5H1339M1336.5 186V200M1340.5 184.5H1344.5V192.5H1340.5ZM1342.5 170V184M1342.5 193V198M1346.5 164.5H1350.5V183.5H1346.5ZM1348.5 161V164M1348.5 184V185M1364.5 194.5H1368.5V205.5H1364.5ZM1366.5 190V194M1366.5 206V207M1376.5 165.5H1380.5V190.5H1376.5ZM1378.5 164V165M1378.5 191V194M1382.5 159.5H1386.5V164.5H1382.5ZM1384.5 146V159M1384.5 165V168M1406.5 167.5H1410.5V190.5H1406.5ZM1408.5 163V167M1408.5 191V192M1412.5 161.5H1416.5V166.5H1412.5ZM1414.5 157V161M1414.5 167V173M1424.5 168.5H1428.5V174.5H1424.5ZM1426.5 156V168M1426.5 175V176M1430.5 137.5H1434.5V166.5H1430.5ZM1432.5 136V137M1432.5 167V168M1436.5 110.5H1440.5V135.5H1436.5ZM1438.5 109V110M1438.5 136V140M1442.5 113.5H1446.5V118.5H1442.5ZM1444.5 99V113M1444.5 119V125M1448.5 95.5H1452.5V110.5H1448.5ZM1450.5 79V95M1450.5 111V114M1454.5 53.5H1458.5V97.5H1454.5ZM1456.5 43V53M1456.5 98V102M1460 52.5H1465M1462.5 52V85M1490.5 81.5H1494.5V84.5H1490.5ZM1492.5 66V81M1492.5 85V96M1496.5 61.5H1500.5V79.5H1496.5ZM1498.5 58V61M1498.5 80V85M1514.5 111.5H1518.5V124.5H1514.5ZM1516.5 106V111M1516.5 125V127M1520.5 100.5H1524.5V112.5H1520.5ZM1522.5 98V100M1522.5 113V120M1526.5 79.5H1530.5V97.5H1526.5ZM1528.5 98V111M1538.5 99.5H1542.5V103.5H1538.5ZM1540.5 96V99M1540.5 104V106" stroke="#ff3c3c" stroke-width="1" fill="none" shape-rendering="crispEdges"/>
<path d="M716 301.5H721M718.5 295V309M866 235.5H871M868.5 231V241" stroke="#ffffff" stroke-width="1" fill="none" shape-rendering="crispEdges"/>
<polyline points="1006.7,314 1079,308 1174,302.7 1250,296 1300,292.3 1350,286 1400,279 1450,272 1500,264 1540,257" fill="none" stroke="#ff8000" stroke-width="1" shape-rendering="crispEdges"/>
<polyline points="598.1,337.7 626.2,338 657.5,338 688.7,338 719.9,337.7 751.1,337.3 782.4,335.7 794.8,335.2 810.7,335 889.7,327 953,319 1016,309.7 1079,300.2 1146.4,290 1169.7,286 1205,280.6 1250,275 1297,270 1318.8,266 1340.6,263 1355,259.6 1369.7,257.4 1384.3,255 1405,253.5 1440,244 1472,235.6 1540,220" fill="none" stroke="#7878ff" stroke-width="1" shape-rendering="crispEdges"/>
<polyline points="472.2,332.5 496.9,334.7 526.1,337.6 555.2,339.4 584.3,340.8 595,341.2 610.6,341.9 626.2,342.7 657.5,342.7 688.7,342.7 719.9,341.9 735.5,340.4 751.1,338.8 766.7,337.3 782.4,335.7 794.8,334.6 800,334.5 839,328.7 889.7,320.8 953,312.9 1016,301.8 1079,292.3 1097,290 1155,280.3 1184,274.5 1205,270.6 1238.7,266.2 1267.8,261.8 1297,259.6 1326,256.7 1348,253.8 1369.7,248.7 1384.3,245 1405,240 1455,225 1494,215 1513,210.2 1540.6,203.3" fill="none" stroke="#00e000" stroke-width="1" shape-rendering="crispEdges"/>
<polyline points="63.5,337.9 77.8,339.1 89.6,340.7 105.4,343.1 121.2,344.7 137,346.6 152.8,347 168.6,347.8 184.5,348.2 196.3,347 200,347.4 242.1,347.4 252.7,347.4 263.2,346.4 273.8,345.3 294.8,345.3 315.9,344.8 331.7,343.7 347.5,342.2 368.6,342.4 389.7,343.2 395,343.4 409.6,342.7 424.1,341.3 438.7,339.1 453.2,337.6 467.8,336.5 482.4,337.3 496.9,339.1 511.5,341.3 526.1,343.4 540.6,344.6 555.2,345.2 569.7,345.6 584.3,345.9 595,345.1 610.6,344.3 626.2,344.3 641.8,342.7 657.5,340.4 673.1,338 688.7,336.5 704.3,334.6 719.9,332.1 735.5,330.2 751.1,328.4 766.7,326.3 782.4,324.8 794.8,323.2 817,319.2 838.7,311.9 851.8,304.1 867.8,296.8 882.4,291 896.9,285.9 915.9,280 933.3,272 947.9,265.5 962.5,258.9 977,252.4 991.6,247.3 995,246.4 1009.6,241.7 1024.1,237.4 1038.7,233 1053.2,229.4 1067.8,226.5 1082.4,225 1096.9,222.8 1111.5,220.6 1123.1,219.2 1134.8,215.5 1146.4,211.9 1158.1,209.7 1169.7,208.2 1181.4,206.5 1193,205.8 1209.6,204.3 1224.1,204.3 1238.7,204.6 1253.2,205 1267.8,206.5 1282.4,207.9 1296.9,209.8 1311.5,210.4 1326.1,210.4 1340.6,210.1 1355.2,209.8 1369.7,208.6 1384.3,206.5 1394.5,205.6 1413.2,202 1431.4,200.2 1449.6,193.8 1467.8,187.4 1486,180.2 1504.2,173.8 1522.4,168.3 1540.6,162" fill="none" stroke="#ff00ff" stroke-width="1" shape-rendering="crispEdges"/>
<polyline points="64.3,356.5 73.8,355.7 81.7,354.1 89.6,351.8 97.5,349 105.4,346.6 113.3,342.7 121.2,340.3 129.1,338.7 141,337.1 152.8,336 168.6,336.8 184.5,337.9 196.3,337.9 200,338.5 210.5,339.5 221.1,341.6 231.6,340.6 242.1,341.4 252.7,341.6 263.2,341.6 273.8,343.7 284.3,344.8 294.8,344.8 305.4,347.4 315.9,351.1 321.2,352.2 337,351.1 347.5,350.1 358.1,350.1 368.6,350.6 379.1,350.1 389.7,348.5 395,347.1 409.6,343.4 424.1,339.8 438.7,331.1 453.2,323.8 462,320.9 470.7,320.1 482.4,320.4 494,323.1 505.7,328.2 520.2,334.7 534.8,342 549.4,349.3 562.5,355.8 574.1,360.9 584.3,364.6 593,366.7 604.4,366.9 613.7,363.8 629.3,359.1 641.8,351.3 657.5,342.7 673.1,333.4 688.7,326.3 704.3,319.3 719.9,313.8 732.4,308.4 744.9,301.4 757.4,293.5 766.7,288.9 776.1,283.4 785.5,281.1 794.8,280 803.7,278.6 813.9,277.9 824.1,274.9 832.9,271.3 844.5,266.2 856.2,262.6 867.8,259.7 879.5,257.5 891.1,253.8 902.8,251.6 911.5,250.2 920.2,245.8 929,238.5 937.7,231.3 946.4,226.9 955.2,222.5 965.4,218.2 974.1,213.1 982.9,210.9 991.6,207.2 995,206.8 1003.7,202.4 1012.5,198.8 1024.1,195.9 1032.9,193.7 1041.6,193.4 1050.3,196.6 1059.1,198.1 1067.8,199.5 1076.5,201.7 1085.3,204.6 1094,207.5 1102.8,209 1111.5,208.5 1126.1,208.5 1140.6,208.5 1155.2,208.2 1169.7,206.1 1181.4,205.3 1193,205.6 1203.7,203.5 1209.6,202.1 1218.3,202.1 1227,204.3 1235.8,205.7 1244.5,207.9 1253.2,210.8 1262,213 1270.7,215.9 1279.5,217.4 1288.2,218.8 1296.9,221 1305.7,221.5 1314.4,220.3 1323.1,217.4 1334.8,217.4 1343.5,215.2 1352.3,210.1 1361,207.9 1369.7,206.5 1378.5,202.1 1387.2,198.4 1394.5,195.5 1405.9,192 1416.8,187.4 1427.8,182 1438.7,175.6 1449.6,169.2 1456.9,160.1 1467.8,149.2 1476.9,141 1486,132.8 1495.1,123.7 1504.2,117.4 1511.5,115.5 1518.8,110.1 1526.1,104.6 1533.3,100.1 1540.6,97.3" fill="none" stroke="#ffff00" stroke-width="1" shape-rendering="crispEdges"/>
<polyline points="64.3,347.4 69.9,344.3 77.8,339.5 85.7,334.8 93.6,332.4 101.5,332 109.4,334 117.3,335.6 125.2,337.9 133.1,339.1 141,338.7 148.9,337.5 160.7,336.8 176.5,336.5 192.4,336.5 200,335.8 207.4,336.9 213.7,340.1 220,342.2 226.3,344.3 232.7,344.8 239,344.3 245.3,343.2 251.6,343.7 259,343.2 265.3,343.2 271.7,345.8 278,347.4 284.3,348 294.8,348 304.3,348 310.6,350.1 320.1,353.8 326.4,354.3 337,353.8 347.5,352.2 358.1,351.6 368.6,350.1 379.1,346.9 387.6,342.7 394.9,339.5 406.6,335.4 418.3,333.2 429.9,327.4 441.6,320.1 453.2,312.9 462,308.5 467.8,306.7 476.5,309.9 485.3,315.8 496.9,326 505.7,334.7 514.4,343.4 523.1,353.6 531.9,363.8 540.6,371.8 546.4,375.2 552.3,375.9 559.6,375.5 568.3,374 575.6,371.1 584.3,367.5 593,363.1 602.8,358.3 610.6,352.1 618.4,348.2 626.2,346.6 635.6,344.3 645,339.6 654.3,337.3 662.1,331 669.9,325.6 679.3,320.9 688.7,314.6 698,309.2 707.4,303.7 716.8,302.1 724.6,299.8 732.4,295.1 741.8,289.6 751.1,285 760.5,282.6 766.7,281.8 774.5,277.9 782.4,274.8 791.7,270.1 795,268.4 803.7,269.1 813.9,269.4 824.1,269.1 832.9,265.5 841.6,261.8 853.2,261.1 862,258.2 870.7,256 876.5,255.3 882.4,250.9 889.7,245.1 899.8,242.2 908.6,238.5 917.3,234.9 926.1,227.6 934.8,221.8 946.4,216.7 955.2,210.1 963.9,205 972.7,199.2 981.4,195.6 990.1,192.7 995,191.5 1006.6,190 1018.3,191.5 1029.9,192.2 1041.6,193.7 1050.3,199.5 1059.1,201.7 1067.8,206.1 1076.5,210.4 1085.3,214.8 1091.1,217 1099.8,216.7 1108.6,216.3 1117.3,216.3 1123.1,214.1 1129,210.4 1137.7,207.5 1146.4,206.1 1155.2,203.2 1161,200.2 1166.8,196.3 1175.6,196.3 1187.2,196.3 1194.5,198.8 1203.7,202.8 1212.5,204.3 1221.2,208.6 1229.9,210.1 1238.7,214.5 1247.4,218.1 1256.2,220.3 1264.9,222.5 1273.6,223.2 1282.4,223.5 1291.1,223.9 1299.8,223.9 1308.6,222.5 1315.9,218.8 1323.1,216.6 1331.9,214.5 1340.6,210.8 1347.9,204.3 1355.2,199.2 1362.5,197.7 1369.7,195.5 1377,189.7 1384.3,185 1393,185 1405.9,181.1 1416.8,179.2 1427.8,179.2 1435,171.1 1442.3,164.7 1449.6,156.5 1456.9,145.6 1464.2,132.8 1471.4,121 1478.7,110.1 1486,102.8 1493.3,96.4 1498.7,88.2 1504.2,83.7 1513.3,82.2 1522.4,81.5 1530.6,79.1 1535.2,83.7 1540.6,87.7" fill="none" stroke="#ffffff" stroke-width="1" shape-rendering="crispEdges"/>
<polyline points="63.5,337.1 73.8,338.7 85.7,339.5 97.5,340.3 109.4,341.1 117.3,340.3 125.2,339.1 133.1,337.9 141,336.8 148.9,335.4 156.8,335.6 164.7,336.8 172.6,337.5 180.5,337.9 188.4,337.9 196.3,337.8 200,337.9 207.4,339.5 213.7,341.6 220,343.7 226.3,346.4 232.7,347.4 239,345.8 245.3,344.3 251.6,342.7 259,342.5 265.3,343.2 271.7,344.8 278,345.8 284.3,347.4 290.6,349 296.9,350.6 303.3,352.7 309.6,354.8 315.9,357.4 320.1,358.5 324.3,357.4 330.7,354.3 337,352.2 343.3,350.6 349.6,349 356,348 362.3,346.9 368.6,344.8 374.9,343.7 381.2,342.2 387.6,341.6 393.9,339.5 403.7,333.2 412.5,330.3 421.2,327.4 429.9,321.6 438.7,315.8 447.4,310.7 456.2,306.3 462,304.9 467.8,305.1 473.6,307.8 479.5,315 485.3,323.1 491.1,331.8 496.9,339.1 502.8,347.1 508.6,353.6 514.4,360.2 520.2,365.3 526.1,368.9 531.9,371.8 539.2,373.7 545,372.9 549.4,371.1 555.2,367.5 561,363.8 566.8,361.6 572.7,360.9 578.5,360.2 584.3,358.3 590.1,358.3 595,359.1 601.2,354.4 607.5,350.5 615.3,346.6 623.1,345.1 630.9,345.1 638.7,341.9 646.5,338 654.3,334.9 662.1,327.9 669.9,320.9 677.7,316.2 685.6,310.7 693.4,305.3 698.8,301.8 707.4,301.4 716.8,300.6 724.6,299.8 730.8,295.9 738.6,290.4 746.4,285 754.3,281.1 763.6,277.2 771.4,274 779.2,268.6 787,267.3 794.8,267.8 800.8,269.1 806.6,272.8 812.5,275.7 818.3,275.7 824.1,272 831.4,267.7 838.7,261.8 844.5,258.2 853.2,254.6 860.5,250.9 867.8,248 873.6,247.7 879.5,248 885.3,245.1 891.1,242.9 899.8,240.7 908.6,237.8 915.9,234.2 921.7,229.1 927.5,221.8 933.3,216 939.2,210.1 945,208 952.3,205.8 958.1,202.9 963.9,199.9 969.7,196.3 977,194.9 984.3,195.9 990.1,195.9 995,193.7 1000.8,193 1006.6,192.2 1012.5,192.7 1018.3,193.7 1024.1,194.4 1029.9,195.9 1037.2,197.3 1044.5,199.5 1050.3,203.2 1056.2,206.8 1062,207.5 1067.8,209.7 1073.6,212.6 1079.5,214.8 1085.3,217.7 1090.4,219.6 1095.5,218.4 1101.3,215.8 1107.1,213.8 1113,211.9 1118.8,209 1124.6,206.1 1130.4,201.7 1136.3,200.2 1142.1,200.2 1147.9,201 1153.7,202.1 1159.6,201 1165.4,198.8 1171.2,198.1 1177,198.8 1182.9,200.2 1188.7,201.7 1194.5,203.9 1202.3,207.2 1209.6,207.2 1215.4,208.6 1221.2,212.3 1227,215.9 1232.9,217.4 1238.7,218.1 1244.5,218.8 1250.3,219.6 1256.2,221 1262,223.2 1267.8,224.7 1273.6,225.8 1279.5,226.1 1285.3,223.9 1291.1,222.5 1296.9,222 1302.8,222.5 1308.6,221 1313,217.4 1317.3,213.7 1323.1,210.1 1329,207.9 1334.8,205.7 1340.6,202.1 1346.4,197.7 1352.3,193.8 1358.1,192.9 1363.9,193.3 1369.7,193.3 1374.1,192.6 1378.5,189 1384.3,184.2 1390.1,183.6 1395,185.6 1402.3,183.8 1409.6,180.2 1416.8,177.4 1425.9,175.6 1431.4,171.1 1436.9,163.8 1443.2,152.9 1449.6,141.9 1455.1,131 1461.4,118.3 1467.8,106.4 1474.2,98.2 1479.6,92.8 1486,90.6 1492.4,89.1 1497.8,86.4 1502.4,84.6 1507.9,87.7 1513.3,92.8 1518.8,96.1 1524.2,96.8 1529.7,95.5 1535.2,95.2 1540.6,96.1" fill="none" stroke="#ff0000" stroke-width="3" stroke-linejoin="round" shape-rendering="crispEdges"/>
<path d="M63 336.1h2v2.4h-2zM75 337.7h2v2.4h-2zM81 338.1h2v2.4h-2zM87 338.5h2v2.4h-2zM111 339.6h2v2.4h-2zM117 338.9h2v2.4h-2zM123 338h2v2.4h-2zM129 337.1h2v2.4h-2zM135 336.2h2v2.4h-2zM141 335.3h2v2.4h-2zM147 334.3h2v2.4h-2zM153 334.3h2v2.4h-2zM159 334.9h2v2.4h-2zM171 336.3h2v2.4h-2zM177 336.6h2v2.4h-2zM183 336.7h2v2.4h-2zM189 336.7h2v2.4h-2zM195 336.6h2v2.4h-2zM201 337.3h2v2.4h-2zM237 344.8h2v2.4h-2zM243 343.3h2v2.4h-2zM249 341.8h2v2.4h-2zM255 341.3h2v2.4h-2zM261 341.7h2v2.4h-2zM321 356.7h2v2.4h-2zM327 354.8h2v3.7h-2zM333 351.8h2v2.4h-2zM339 350.1h2v2.4h-2zM345 348.6h2v2.4h-2zM351 347.3h2v2.4h-2zM357 346.3h2v2.4h-2zM363 345h2v2.4h-2zM369 343.3h2v2.4h-2zM375 342.1h2v2.4h-2zM381 340.9h2v2.4h-2zM387 340.1h2v2.4h-2zM393 337.9h2v2.4h-2zM399 334.7h2v5h-2zM405 331.7h2v4.2h-2zM411 329.1h2v2.4h-2zM417 327.1h2v2.4h-2zM423 324.6h2v4.3h-2zM429 320.6h2v5.2h-2zM435 316.6h2v5.2h-2zM441 313h2v4.9h-2zM447 309.5h2v4.6h-2zM453 306.5h2v4.2h-2zM459 304h2v2.4h-2zM465 303.9h2v2.4h-2zM543 371.7h2v2.4h-2zM549 369.8h2v3.7h-2zM555 366.1h2v5h-2zM561 362.7h2v4.6h-2zM567 360.2h2v2.4h-2zM573 359.5h2v2.4h-2zM579 358.3h2v2.4h-2zM585 357.1h2v2.4h-2zM591 357.5h2v2.4h-2zM597 355.3h2v2.4h-2zM603 351.8h2v5.3h-2zM609 348.4h2v4.6h-2zM615 345.8h2v3.8h-2zM621 344h2v2.4h-2zM627 343.9h2v2.4h-2zM633 342.4h2v2.4h-2zM639 340.5h2v3.8h-2zM645 337.5h2v4.2h-2zM651 335.1h2v3.6h-2zM657 330.6h2v5.7h-2zM663 325.2h2v6.6h-2zM669 319.9h2v6.4h-2zM675 316.3h2v4.8h-2zM681 312.3h2v5.3h-2zM687 308.1h2v5.4h-2zM693 303.9h2v5.3h-2zM699 301.1h2v4h-2zM705 300.2h2v2.4h-2zM711 299.7h2v2.4h-2zM717 299.2h2v2.4h-2zM723 298.6h2v2.4h-2zM729 295.5h2v4.9h-2zM735 291.3h2v5.4h-2zM741 287.1h2v5.4h-2zM747 283.3h2v5h-2zM753 280.4h2v4.2h-2zM759 277.9h2v3.7h-2zM765 275.4h2v3.7h-2zM771 272.7h2v3.9h-2zM777 268.5h2v5.4h-2zM783 266.5h2v2.4h-2zM789 266.3h2v2.4h-2zM819 273.1h2v2.4h-2zM825 270h2v4.9h-2zM831 266.2h2v5h-2zM837 261.4h2v6h-2zM843 257.6h2v5h-2zM849 255.1h2v3.7h-2zM855 252.3h2v4h-2zM861 249.5h2v4h-2zM867 246.8h2v2.4h-2zM873 246.6h2v2.4h-2zM879 246.3h2v2.4h-2zM885 244h2v4h-2zM891 241.4h2v2.4h-2zM897 239.9h2v2.4h-2zM903 238h2v2.4h-2zM909 235.7h2v2.4h-2zM915 233h2v4.4h-2zM921 227.5h2v6.8h-2zM927 220.2h2v8.5h-2zM933 214.2h2v7.2h-2zM939 209h2v6.4h-2zM945 206.3h2v2.4h-2zM951 204.5h2v2.4h-2zM957 202.1h2v4.2h-2zM963 199h2v4.3h-2zM969 195.6h2v4.6h-2zM975 193.8h2v2.4h-2zM993 192.7h2v2.4h-2zM999 191.8h2v2.4h-2zM1005 191h2v2.4h-2zM1095 216.8h2v2.4h-2zM1101 214.8h2v3.8h-2zM1107 212.1h2v2.4h-2zM1113 209.9h2v2.4h-2zM1119 207.5h2v4.2h-2zM1125 204h2v4.7h-2zM1131 200.6h2v4.7h-2zM1137 199h2v2.4h-2zM1155 200.4h2v2.4h-2zM1161 198.7h2v2.4h-2zM1167 197.2h2v2.4h-2zM1173 197.3h2v2.4h-2zM1281 223.8h2v2.4h-2zM1287 221.9h2v2.4h-2zM1293 221h2v2.4h-2zM1305 220.3h2v2.4h-2zM1311 217.2h2v5h-2zM1317 212.4h2v6h-2zM1323 209h2v4.6h-2zM1329 206.1h2v2.4h-2zM1335 204.1h2v3.9h-2zM1341 200.1h2v5.2h-2zM1347 195.7h2v5.5h-2zM1353 192.8h2v4.1h-2zM1371 191.7h2v2.4h-2zM1377 188.4h2v5.1h-2zM1383 183.6h2v6h-2zM1389 182.5h2v2.4h-2zM1401 182.5h2v2.4h-2zM1407 180.1h2v4.2h-2zM1413 177.1h2v2.4h-2zM1419 175.5h2v2.4h-2zM1425 173.9h2v2.4h-2zM1431 169h2v6.7h-2zM1437 160.4h2v9.8h-2zM1443 150.1h2v11.5h-2zM1449 139.5h2v11.7h-2zM1455 127.5h2v13.2h-2zM1461 115.7h2v13h-2zM1467 104.9h2v11.9h-2zM1473 97.3h2v8.8h-2zM1479 91.9h2v6.6h-2zM1485 89.3h2v2.4h-2zM1491 87.9h2v2.4h-2zM1497 85.6h2v4.1h-2zM1503 84.6h2v2.4h-2zM1527 94.6h2v2.4h-2zM1533 94h2v2.4h-2z" fill="#ffff00"/>
<path d="M69 337h2v2.4h-2zM93 338.9h2v2.4h-2zM99 339.3h2v2.4h-2zM105 339.7h2v2.4h-2zM165 335.7h2v2.4h-2zM207 338.7h2v2.4h-2zM213 340.7h2v2.4h-2zM219 342.7h2v2.4h-2zM225 343.3h2v3.7h-2zM231 346.2h2v2.4h-2zM267 342.8h2v2.4h-2zM273 344.1h2v2.4h-2zM279 345.3h2v2.4h-2zM285 346.8h2v2.4h-2zM291 348.3h2v2.4h-2zM297 349.9h2v2.4h-2zM303 351.9h2v2.4h-2zM309 354h2v2.4h-2zM315 354.6h2v3.6h-2zM471 306.1h2v2.4h-2zM477 306.7h2v7.8h-2zM483 313.2h2v9.3h-2zM489 321.4h2v10.1h-2zM495 330.3h2v8.9h-2zM501 337.9h2v9.4h-2zM507 346.1h2v8h-2zM513 352.9h2v7.9h-2zM519 359.7h2v6.4h-2zM525 364.9h2v4.9h-2zM531 368.5h2v4.1h-2zM537 372.4h2v2.4h-2zM795 267h2v2.4h-2zM801 269h2v2.4h-2zM807 269.6h2v4.7h-2zM813 274.5h2v2.4h-2zM981 194.4h2v2.4h-2zM987 194.7h2v2.4h-2zM1011 191.5h2v2.4h-2zM1017 192.5h2v2.4h-2zM1023 193.3h2v2.4h-2zM1029 194.8h2v2.4h-2zM1035 196h2v2.4h-2zM1041 197.7h2v2.4h-2zM1047 198.3h2v4.3h-2zM1053 201.4h2v5h-2zM1059 206.1h2v2.4h-2zM1065 208h2v2.4h-2zM1071 208.6h2v4h-2zM1077 213.2h2v2.4h-2zM1083 213.8h2v4.1h-2zM1089 218.4h2v2.4h-2zM1143 199.3h2v2.4h-2zM1149 200.3h2v2.4h-2zM1179 198.5h2v2.4h-2zM1185 200h2v2.4h-2zM1191 201.9h2v2.4h-2zM1197 202.5h2v3.6h-2zM1203 206h2v2.4h-2zM1209 206.2h2v2.4h-2zM1215 208.1h2v2.4h-2zM1221 208.7h2v5h-2zM1227 212.5h2v4.4h-2zM1233 216.4h2v2.4h-2zM1239 217.1h2v2.4h-2zM1245 217.9h2v2.4h-2zM1251 218.9h2v2.4h-2zM1257 220.7h2v2.4h-2zM1263 222.6h2v2.4h-2zM1269 224h2v2.4h-2zM1275 224.8h2v2.4h-2zM1299 221.1h2v2.4h-2zM1359 191.9h2v2.4h-2zM1365 192.1h2v2.4h-2zM1395 184h2v2.4h-2zM1509 85.2h2v5.6h-2zM1515 89.6h2v5.7h-2zM1521 95.4h2v2.4h-2zM1539 94.8h2v2.4h-2z" fill="#0000ff"/>
<defs><linearGradient id="ga" x1="0" y1="0" x2="0" y2="1"><stop offset="0" stop-color="#7aa828"/><stop offset="0.45" stop-color="#1c7a2c"/><stop offset="1" stop-color="#0c6428"/></linearGradient><linearGradient id="oa" x1="0" y1="0" x2="0" y2="1"><stop offset="0" stop-color="#ff3c00"/><stop offset="0.55" stop-color="#ff5a08"/><stop offset="1" stop-color="#ff9838"/></linearGradient></defs>
<path d="M74.3 325.8 h4.4 v4.2 h2.8 l-5 5.8 l-5 -5.8 h2.8 z" fill="url(#ga)"/>
<path d="M92.3 326.8 h4.4 v4.2 h2.8 l-5 5.8 l-5 -5.8 h2.8 z" fill="url(#ga)"/>
<path d="M82.5 340.5 l5 5.4 h-2.8 v4.4 h-4.4 v-4.4 h-2.8 z" fill="url(#oa)"/>
<path d="M118.5 349.6 l5 5.4 h-2.8 v4.4 h-4.4 v-4.4 h-2.8 z" fill="url(#oa)"/>
<path d="M164.3 331 h4.4 v4.2 h2.8 l-5 5.8 l-5 -5.8 h2.8 z" fill="url(#ga)"/>
<path d="M196.5 337.8 l5 5.4 h-2.8 v4.4 h-4.4 v-4.4 h-2.8 z" fill="url(#oa)"/>
<path d="M212.3 329.8 h4.4 v4.2 h2.8 l-5 5.8 l-5 -5.8 h2.8 z" fill="url(#ga)"/>
<path d="M244.5 348.3 l5 5.4 h-2.8 v4.4 h-4.4 v-4.4 h-2.8 z" fill="url(#oa)"/>
<path d="M272.3 332.8 h4.4 v4.2 h2.8 l-5 5.8 l-5 -5.8 h2.8 z" fill="url(#ga)"/>
<path d="M334.5 349.3 l5 5.4 h-2.8 v4.4 h-4.4 v-4.4 h-2.8 z" fill="url(#oa)"/>
<path d="M476.3 295.8 h4.4 v4.2 h2.8 l-5 5.8 l-5 -5.8 h2.8 z" fill="url(#ga)"/>
<path d="M556.5 371.6 l5 5.4 h-2.8 v4.4 h-4.4 v-4.4 h-2.8 z" fill="url(#oa)"/>
<path d="M596.3 347.2 h4.4 v4.2 h2.8 l-5 5.8 l-5 -5.8 h2.8 z" fill="url(#ga)"/>
<path d="M604.5 358.3 l5 5.4 h-2.8 v4.4 h-4.4 v-4.4 h-2.8 z" fill="url(#oa)"/>
<path d="M632.3 328.5 h4.4 v4.2 h2.8 l-5 5.8 l-5 -5.8 h2.8 z" fill="url(#ga)"/>
<path d="M722.3 289.1 h4.4 v4.2 h2.8 l-5 5.8 l-5 -5.8 h2.8 z" fill="url(#ga)"/>
<path d="M730.5 300.4 l5 5.4 h-2.8 v4.4 h-4.4 v-4.4 h-2.8 z" fill="url(#oa)"/>
<path d="M800.3 251 h4.4 v4.2 h2.8 l-5 5.8 l-5 -5.8 h2.8 z" fill="url(#ga)"/>
<path d="M826.5 279.8 l5 5.4 h-2.8 v4.4 h-4.4 v-4.4 h-2.8 z" fill="url(#oa)"/>
<path d="M878.3 229.6 h4.4 v4.2 h2.8 l-5 5.8 l-5 -5.8 h2.8 z" fill="url(#ga)"/>
<path d="M986.3 184.5 h4.4 v4.2 h2.8 l-5 5.8 l-5 -5.8 h2.8 z" fill="url(#ga)"/>
<path d="M1000.5 198.8 l5 5.4 h-2.8 v4.4 h-4.4 v-4.4 h-2.8 z" fill="url(#oa)"/>
<path d="M1016.3 176 h4.4 v4.2 h2.8 l-5 5.8 l-5 -5.8 h2.8 z" fill="url(#ga)"/>
<path d="M1102.5 231.3 l5 5.4 h-2.8 v4.4 h-4.4 v-4.4 h-2.8 z" fill="url(#oa)"/>
<path d="M1148.3 192 h4.4 v4.2 h2.8 l-5 5.8 l-5 -5.8 h2.8 z" fill="url(#ga)"/>
<path d="M1168.5 197.8 l5 5.4 h-2.8 v4.4 h-4.4 v-4.4 h-2.8 z" fill="url(#oa)"/>
<path d="M1184.3 184.8 h4.4 v4.2 h2.8 l-5 5.8 l-5 -5.8 h2.8 z" fill="url(#ga)"/>
<path d="M1216.5 210.6 l5 5.4 h-2.8 v4.4 h-4.4 v-4.4 h-2.8 z" fill="url(#oa)"/>
<path d="M1220.3 188 h4.4 v4.2 h2.8 l-5 5.8 l-5 -5.8 h2.8 z" fill="url(#ga)"/>
<path d="M1288.5 235.4 l5 5.4 h-2.8 v4.4 h-4.4 v-4.4 h-2.8 z" fill="url(#oa)"/>
<path d="M1304.3 213.5 h4.4 v4.2 h2.8 l-5 5.8 l-5 -5.8 h2.8 z" fill="url(#ga)"/>
<path d="M1312.5 229.6 l5 5.4 h-2.8 v4.4 h-4.4 v-4.4 h-2.8 z" fill="url(#oa)"/>
<path d="M1364.3 179 h4.4 v4.2 h2.8 l-5 5.8 l-5 -5.8 h2.8 z" fill="url(#ga)"/>
<path d="M1378.5 191.7 l5 5.4 h-2.8 v4.4 h-4.4 v-4.4 h-2.8 z" fill="url(#oa)"/>
<path d="M1400.3 178 h4.4 v4.2 h2.8 l-5 5.8 l-5 -5.8 h2.8 z" fill="url(#ga)"/>
<path d="M1414.5 188.1 l5 5.4 h-2.8 v4.4 h-4.4 v-4.4 h-2.8 z" fill="url(#oa)"/>
<path d="M1514.3 83.5 h4.4 v4.2 h2.8 l-5 5.8 l-5 -5.8 h2.8 z" fill="url(#ga)"/>
<path d="M1534.5 106.2 l5 5.4 h-2.8 v4.4 h-4.4 v-4.4 h-2.8 z" fill="url(#oa)"/>
<path d="M1544.3 93.5 h4.4 v4.2 h2.8 l-5 5.8 l-5 -5.8 h2.8 z" fill="url(#ga)"/>
<text x="1412" y="47" font-size="11" fill="#e8e8e8" text-anchor="start" font-weight="bold">26.83</text>
<path d="M1444 43.5 H1455 M1452 40.5 L1455 43.5 L1452 46.5" stroke="#e8e8e8" stroke-width="1" fill="none"/>
<text x="484" y="413" font-size="11" fill="#e8e8e8" text-anchor="start" font-weight="bold">9.21</text>
<path d="M509 409.5 H519 M516 406.5 L519 409.5 L516 412.5" stroke="#e8e8e8" stroke-width="1" fill="none"/>
<line x1="63" y1="464.5" x2="1657" y2="464.5" stroke="#c00000" stroke-width="1" stroke-dasharray="1 1" shape-rendering="crispEdges"/>
<line x1="63" y1="508.5" x2="1657" y2="508.5" stroke="#c00000" stroke-width="1" stroke-dasharray="1 1" shape-rendering="crispEdges"/>
<text x="57" y="468.5" font-size="13.5" fill="#d8d8d8" text-anchor="end" font-weight="bold" style="font-family:'Liberation Serif','Noto Serif CJK SC',serif">0.8</text>
<text x="57" y="512.5" font-size="13.5" fill="#d8d8d8" text-anchor="end" font-weight="bold" style="font-family:'Liberation Serif','Noto Serif CJK SC',serif">0.4</text>
<path d="M64 551.5L106.5 551.5L112.5 442L118.5 551.5L220.5 551.5L226.5 442L232.5 551.5L316.5 551.5L322.5 442L328.5 551.5L514.5 551.5L520.5 442L526.5 551.5L808.5 551.5L814.5 442L820.5 551.5L1084.5 551.5L1090.5 442L1096.5 551.5L1222.5 551.5L1228.5 442L1234.5 551.5L1510.5 551.5L1516.5 442L1522.5 551.5L1541 551.5" fill="none" stroke="#e00000" stroke-width="1.2" stroke-linejoin="miter"/>
<path d="M64 551.5L148.5 551.5L154.5 442L160.5 551.5L244.5 551.5L250.5 442L256.5 551.5L460.5 551.5L466.5 442L472.5 551.5L772.5 551.5L778.5 442L784.5 551.5L970.5 551.5L976.5 442L982.5 551.5L1126.5 551.5L1132.5 442L1138.5 551.5L1462.5 551.5L1468.5 442L1474.5 551.5L1541 551.5" fill="none" stroke="#00e0e0" stroke-width="1.2" stroke-linejoin="miter"/>
<circle cx="67.5" cy="436.5" r="3" fill="#c8c8c8"/>
<circle cx="74.5" cy="436.5" r="3" fill="#c8c8c8"/>
<circle cx="81.5" cy="436.5" r="3" fill="#c8c8c8"/>
<circle cx="88.5" cy="436.5" r="3" fill="#c8c8c8"/>
<circle cx="95.5" cy="436.5" r="3" fill="#c8c8c8"/>
<text x="99" y="440.5" font-size="12.3" fill="#e0e0e0" text-anchor="start" font-weight="normal">亿万</text>
<text x="127" y="440.5" font-size="12.3" fill="#ff0000" text-anchor="start" font-weight="normal">低位买进:0.0000</text>
<text x="222" y="440.5" font-size="12.3" fill="#00e0e0" text-anchor="start" font-weight="normal">高位抛出:0.0000</text>
<text x="63" y="569" font-size="12.3" fill="#e0e0e0" text-anchor="start" font-weight="normal" textLength="67" lengthAdjust="spacingAndGlyphs">界文KDJ改进</text>
<text x="136" y="569" font-size="12.3" fill="#e060ff" text-anchor="start" font-weight="normal">短K:64.7507</text>
<text x="209" y="569" font-size="12.3" fill="#40e0e0" text-anchor="start" font-weight="normal">短D:67.2691</text>
<text x="283" y="569" font-size="12.3" fill="#ff2020" text-anchor="start" font-weight="normal">中K:74.9015</text>
<text x="357" y="569" font-size="12.3" fill="#30b030" text-anchor="start" font-weight="normal">中D:78.7071</text>
<text x="430" y="569" font-size="12.3" fill="#ffffff" text-anchor="start" font-weight="normal">底线:10.0000</text>
<text x="509" y="569" font-size="12.3" fill="#ffff00" text-anchor="start" font-weight="normal">顶线:90.0000</text>
<line x1="63" y1="591.5" x2="1657" y2="591.5" stroke="#c00000" stroke-width="1" stroke-dasharray="1 1" shape-rendering="crispEdges"/>
<line x1="1543" y1="642.5" x2="1657" y2="642.5" stroke="#c00000" stroke-width="1" stroke-dasharray="1 1" shape-rendering="crispEdges"/>
<text x="57" y="596.5" font-size="13.5" fill="#d8d8d8" text-anchor="end" font-weight="bold" style="font-family:'Liberation Serif','Noto Serif CJK SC',serif">80</text>
<text x="57" y="647.5" font-size="13.5" fill="#d8d8d8" text-anchor="end" font-weight="bold" style="font-family:'Liberation Serif','Noto Serif CJK SC',serif">40</text>
<line x1="64" y1="578.5" x2="1541" y2="578.5" stroke="#ffff00" stroke-width="1" shape-rendering="crispEdges"/>
<line x1="64" y1="680.5" x2="1541" y2="680.5" stroke="#ffffff" stroke-width="1" shape-rendering="crispEdges"/>
<path d="M61 616h5v27h-5zM67 616h5v27h-5zM73 616h5v27h-5zM79 616h5v27h-5zM85 616h5v27h-5zM91 616h5v27h-5zM97 616h5v27h-5zM103 616h5v27h-5zM109 616h5v27h-5zM115 616h5v27h-5zM121 616h5v27h-5zM127 616h5v27h-5zM133 616h5v27h-5zM139 616h5v27h-5zM145 616h5v27h-5zM151 616h5v27h-5zM157 616h5v27h-5zM163 616h5v27h-5zM169 616h5v27h-5zM175 616h5v27h-5zM181 616h5v27h-5zM187 616h5v27h-5zM193 616h5v27h-5zM199 616h5v27h-5zM205 616h5v27h-5zM211 616h5v27h-5zM217 616h5v27h-5zM223 616h5v27h-5zM229 616h5v27h-5zM235 616h5v27h-5zM241 616h5v27h-5zM247 616h5v27h-5zM253 616h5v27h-5zM259 616h5v27h-5zM265 616h5v27h-5zM271 616h5v27h-5zM277 616h5v27h-5zM283 616h5v27h-5zM289 616h5v27h-5zM295 616h5v27h-5zM301 616h5v27h-5zM307 616h5v27h-5zM313 616h5v27h-5zM319 616h5v27h-5zM325 616h5v27h-5zM331 616h5v27h-5zM337 616h5v27h-5zM343 616h5v27h-5zM349 616h5v27h-5zM355 616h5v27h-5zM361 616h5v27h-5zM367 616h5v27h-5zM373 616h5v27h-5zM379 616h5v27h-5zM385 616h5v27h-5zM391 616h5v27h-5zM397 616h5v27h-5zM403 616h5v27h-5zM409 616h5v27h-5zM415 616h5v27h-5zM421 616h5v27h-5zM427 616h5v27h-5zM433 616h5v27h-5zM439 616h5v27h-5zM445 616h5v27h-5zM451 616h5v27h-5zM457 616h5v27h-5zM463 616h5v27h-5zM469 616h5v27h-5zM475 616h5v27h-5zM481 616h5v27h-5zM487 616h5v27h-5zM493 616h5v27h-5zM499 616h5v27h-5zM505 616h5v27h-5zM511 616h5v27h-5zM517 616h5v27h-5zM523 616h5v27h-5zM529 616h5v27h-5zM535 616h5v27h-5zM541 616h5v27h-5zM547 616h5v27h-5zM553 616h5v27h-5zM559 616h5v27h-5zM565 616h5v27h-5zM571 616h5v27h-5zM577 616h5v27h-5zM583 616h5v27h-5zM589 616h5v27h-5zM595 616h5v27h-5zM601 616h5v27h-5zM607 616h5v27h-5zM613 616h5v27h-5zM619 616h5v27h-5zM625 616h5v27h-5zM631 616h5v27h-5zM637 616h5v27h-5zM643 616h5v27h-5zM649 616h5v27h-5zM655 616h5v27h-5zM661 616h5v27h-5zM667 616h5v27h-5zM673 616h5v27h-5zM679 616h5v27h-5zM685 616h5v27h-5zM691 616h5v27h-5zM697 616h5v27h-5zM703 616h5v27h-5zM709 616h5v27h-5zM715 616h5v27h-5zM721 616h5v27h-5zM727 616h5v27h-5zM733 616h5v27h-5zM739 616h5v27h-5zM745 616h5v27h-5zM751 616h5v27h-5zM757 616h5v27h-5zM763 616h5v27h-5zM769 616h5v27h-5zM775 616h5v27h-5zM781 616h5v27h-5zM787 616h5v27h-5zM793 616h5v27h-5zM799 616h5v27h-5zM805 616h5v27h-5zM811 616h5v27h-5zM817 616h5v27h-5zM823 616h5v27h-5zM829 616h5v27h-5zM835 616h5v27h-5zM841 616h5v27h-5zM847 616h5v27h-5zM853 616h5v27h-5zM859 616h5v27h-5zM865 616h5v27h-5zM871 616h5v27h-5zM877 616h5v27h-5zM883 616h5v27h-5zM889 616h5v27h-5zM895 616h5v27h-5zM901 616h5v27h-5zM907 616h5v27h-5zM913 616h5v27h-5zM919 616h5v27h-5zM925 616h5v27h-5zM931 616h5v27h-5zM937 616h5v27h-5zM943 616h5v27h-5zM949 616h5v27h-5zM955 616h5v27h-5zM961 616h5v27h-5zM967 616h5v27h-5zM973 616h5v27h-5zM979 616h5v27h-5zM985 616h5v27h-5zM991 616h5v27h-5zM997 616h5v27h-5zM1003 616h5v27h-5zM1009 616h5v27h-5zM1015 616h5v27h-5zM1021 616h5v27h-5zM1027 616h5v27h-5zM1033 616h5v27h-5zM1039 616h5v27h-5zM1045 616h5v27h-5zM1051 616h5v27h-5zM1057 616h5v27h-5zM1063 616h5v27h-5zM1069 616h5v27h-5zM1075 616h5v27h-5zM1081 616h5v27h-5zM1087 616h5v27h-5zM1093 616h5v27h-5zM1099 616h5v27h-5zM1105 616h5v27h-5zM1111 616h5v27h-5zM1117 616h5v27h-5zM1123 616h5v27h-5zM1129 616h5v27h-5zM1135 616h5v27h-5zM1141 616h5v27h-5zM1147 616h5v27h-5zM1153 616h5v27h-5zM1159 616h5v27h-5zM1165 616h5v27h-5zM1171 616h5v27h-5zM1177 616h5v27h-5zM1183 616h5v27h-5zM1189 616h5v27h-5zM1195 616h5v27h-5zM1201 616h5v27h-5zM1207 616h5v27h-5zM1213 616h5v27h-5zM1219 616h5v27h-5zM1225 616h5v27h-5zM1231 616h5v27h-5zM1237 616h5v27h-5zM1243 616h5v27h-5zM1249 616h5v27h-5zM1255 616h5v27h-5zM1261 616h5v27h-5zM1267 616h5v27h-5zM1273 616h5v27h-5zM1279 616h5v27h-5zM1285 616h5v27h-5zM1291 616h5v27h-5zM1297 616h5v27h-5zM1303 616h5v27h-5zM1309 616h5v27h-5zM1315 616h5v27h-5zM1321 616h5v27h-5zM1327 616h5v27h-5zM1333 616h5v27h-5zM1339 616h5v27h-5zM1345 616h5v27h-5zM1351 616h5v27h-5zM1357 616h5v27h-5zM1363 616h5v27h-5zM1369 616h5v27h-5zM1375 616h5v27h-5zM1381 616h5v27h-5zM1387 616h5v27h-5zM1393 616h5v27h-5zM1399 616h5v27h-5zM1405 616h5v27h-5zM1411 616h5v27h-5zM1417 616h5v27h-5zM1423 616h5v27h-5zM1429 616h5v27h-5zM1435 616h5v27h-5zM1441 616h5v27h-5zM1447 616h5v27h-5zM1453 616h5v27h-5zM1459 616h5v27h-5zM1465 616h5v27h-5zM1471 616h5v27h-5zM1477 616h5v27h-5zM1483 616h5v27h-5zM1489 616h5v27h-5zM1495 616h5v27h-5zM1501 616h5v27h-5zM1507 616h5v27h-5zM1513 616h5v27h-5zM1519 616h5v27h-5zM1525 616h5v27h-5zM1531 616h5v27h-5zM1537 616h5v27h-5z" fill="#a0a0a0" shape-rendering="crispEdges"/>
<path d="M116.5 611.5h3v3h-3zM140.5 609.5h3v3h-3zM146.5 605.5h3v4h-3zM236.5 649.5h3v6h-3zM242.5 631.5h3v16h-3zM248.5 629.5h3v12h-3zM254.5 625.5h3v11h-3zM260.5 627.5h3v6h-3zM266.5 630.5h3v2h-3zM320.5 659.5h3v5h-3zM326.5 646.5h3v12h-3zM332.5 627.5h3v21h-3zM338.5 612.5h3v23h-3zM344.5 608.5h3v19h-3zM350.5 606.5h3v14h-3zM356.5 605.5h3v10h-3zM362.5 601.5h3v9h-3zM368.5 597.5h3v9h-3zM374.5 591.5h3v10h-3zM380.5 585.5h3v11h-3zM386.5 580.5h3v10h-3zM392.5 575.5h3v10h-3zM398.5 575.5h3v7h-3zM404.5 573.5h3v6h-3zM410.5 573.5h3v4h-3zM422.5 573.5h3v2h-3zM428.5 572.5h3v2h-3zM536.5 667.5h3v2h-3zM542.5 664.5h3v3h-3zM548.5 654.5h3v9h-3zM554.5 648.5h3v10h-3zM560.5 643.5h3v10h-3zM566.5 643.5h3v7h-3zM572.5 639.5h3v7h-3zM578.5 640.5h3v4h-3zM584.5 640.5h3v3h-3zM596.5 636.5h3v4h-3zM602.5 631.5h3v5h-3zM608.5 623.5h3v9h-3zM614.5 617.5h3v10h-3zM620.5 607.5h3v13h-3zM626.5 607.5h3v9h-3zM632.5 600.5h3v11h-3zM638.5 589.5h3v14h-3zM644.5 582.5h3v14h-3zM650.5 578.5h3v12h-3zM656.5 575.5h3v10h-3zM662.5 572.5h3v9h-3zM668.5 572.5h3v6h-3zM674.5 575.5h3v2h-3zM728.5 585.5h3v3h-3zM734.5 585.5h3v2h-3zM740.5 581.5h3v4h-3zM758.5 581.5h3v3h-3zM770.5 580.5h3v3h-3zM824.5 611.5h3v5h-3zM830.5 604.5h3v8h-3zM836.5 596.5h3v10h-3zM842.5 599.5h3v5h-3zM854.5 600.5h3v2h-3zM860.5 594.5h3v6h-3zM866.5 590.5h3v6h-3zM884.5 592.5h3v4h-3zM902.5 590.5h3v4h-3zM908.5 591.5h3v2h-3zM914.5 585.5h3v5h-3zM920.5 579.5h3v7h-3zM926.5 581.5h3v4h-3zM932.5 579.5h3v3h-3zM938.5 580.5h3v2h-3zM962.5 578.5h3v3h-3zM968.5 576.5h3v3h-3zM1094.5 657.5h3v5h-3zM1100.5 646.5h3v10h-3zM1106.5 642.5h3v10h-3zM1112.5 630.5h3v15h-3zM1118.5 627.5h3v12h-3zM1124.5 611.5h3v18h-3zM1130.5 604.5h3v17h-3zM1136.5 611.5h3v7h-3zM1160.5 609.5h3v7h-3zM1166.5 606.5h3v7h-3zM1172.5 609.5h3v2h-3zM1280.5 656.5h3v4h-3zM1286.5 646.5h3v9h-3zM1292.5 645.5h3v7h-3zM1304.5 647.5h3v4h-3zM1310.5 627.5h3v16h-3zM1316.5 612.5h3v21h-3zM1322.5 612.5h3v13h-3zM1328.5 609.5h3v11h-3zM1334.5 606.5h3v10h-3zM1340.5 600.5h3v10h-3zM1346.5 591.5h3v13h-3zM1352.5 594.5h3v7h-3zM1376.5 597.5h3v6h-3zM1382.5 592.5h3v5h-3zM1412.5 599.5h3v3h-3zM1418.5 599.5h3v2h-3zM1424.5 597.5h3v3h-3zM1430.5 587.5h3v9h-3zM1436.5 580.5h3v8h-3zM1442.5 580.5h3v5h-3zM1448.5 579.5h3v4h-3zM1454.5 577.5h3v4h-3zM1460.5 575.5h3v4h-3zM1466.5 575.5h3v2h-3z" fill="none" stroke="#ff40ff" stroke-width="1" shape-rendering="crispEdges"/>
<path d="M62.5 599.5h3v2h-3zM68.5 602.5h3v4h-3zM74.5 603.5h3v3h-3zM80.5 604.5h3v2h-3zM86.5 606.5h3v2h-3zM92.5 608.5h3v5h-3zM98.5 610.5h3v5h-3zM104.5 614.5h3v7h-3zM110.5 615.5h3v2h-3zM152.5 610.5h3v2h-3zM158.5 614.5h3v8h-3zM164.5 617.5h3v7h-3zM170.5 620.5h3v6h-3zM176.5 625.5h3v10h-3zM182.5 629.5h3v7h-3zM188.5 631.5h3v5h-3zM206.5 635.5h3v6h-3zM212.5 642.5h3v15h-3zM218.5 650.5h3v17h-3zM224.5 656.5h3v12h-3zM230.5 658.5h3v4h-3zM272.5 637.5h3v9h-3zM278.5 641.5h3v8h-3zM284.5 644.5h3v6h-3zM290.5 646.5h3v6h-3zM296.5 650.5h3v8h-3zM302.5 655.5h3v10h-3zM308.5 661.5h3v11h-3zM314.5 666.5h3v10h-3zM452.5 576.5h3v3h-3zM464.5 579.5h3v6h-3zM470.5 588.5h3v19h-3zM476.5 604.5h3v30h-3zM482.5 619.5h3v31h-3zM488.5 632.5h3v26h-3zM494.5 644.5h3v23h-3zM500.5 653.5h3v19h-3zM506.5 660.5h3v15h-3zM512.5 667.5h3v13h-3zM518.5 669.5h3v5h-3zM524.5 670.5h3v3h-3zM698.5 577.5h3v3h-3zM704.5 580.5h3v7h-3zM710.5 584.5h3v8h-3zM716.5 588.5h3v7h-3zM722.5 589.5h3v3h-3zM764.5 584.5h3v2h-3zM782.5 584.5h3v3h-3zM788.5 587.5h3v6h-3zM794.5 591.5h3v9h-3zM800.5 599.5h3v14h-3zM806.5 609.5h3v20h-3zM812.5 616.5h3v16h-3zM818.5 618.5h3v4h-3zM872.5 598.5h3v3h-3zM944.5 583.5h3v3h-3zM980.5 583.5h3v8h-3zM986.5 588.5h3v8h-3zM992.5 589.5h3v3h-3zM1010.5 590.5h3v3h-3zM1016.5 594.5h3v9h-3zM1022.5 596.5h3v4h-3zM1028.5 599.5h3v6h-3zM1034.5 602.5h3v6h-3zM1040.5 606.5h3v8h-3zM1046.5 613.5h3v15h-3zM1052.5 622.5h3v18h-3zM1058.5 628.5h3v12h-3zM1064.5 635.5h3v14h-3zM1070.5 642.5h3v13h-3zM1076.5 650.5h3v15h-3zM1082.5 657.5h3v15h-3zM1088.5 664.5h3v13h-3zM1148.5 618.5h3v3h-3zM1178.5 613.5h3v2h-3zM1184.5 615.5h3v5h-3zM1190.5 621.5h3v12h-3zM1196.5 632.5h3v13h-3zM1202.5 632.5h3v6h-3zM1214.5 637.5h3v10h-3zM1220.5 645.5h3v14h-3zM1226.5 650.5h3v11h-3zM1232.5 651.5h3v2h-3zM1238.5 652.5h3v3h-3zM1262.5 656.5h3v6h-3zM1268.5 660.5h3v6h-3zM1274.5 663.5h3v6h-3zM1298.5 653.5h3v2h-3zM1358.5 603.5h3v5h-3zM1364.5 605.5h3v4h-3zM1370.5 607.5h3v4h-3zM1394.5 602.5h3v4h-3zM1400.5 606.5h3v7h-3zM1478.5 579.5h3v2h-3zM1484.5 582.5h3v5h-3zM1490.5 584.5h3v6h-3zM1502.5 588.5h3v4h-3zM1508.5 593.5h3v12h-3zM1514.5 599.5h3v12h-3zM1520.5 603.5h3v8h-3zM1526.5 604.5h3v2h-3zM1532.5 606.5h3v3h-3zM1538.5 607.5h3v3h-3z" fill="none" stroke="#60ffff" stroke-width="1" shape-rendering="crispEdges"/>
<path d="M122 613h4v2h-4zM128 613h4v2h-4zM134 612h4v2h-4zM200 629h4v2h-4zM416 576h4v1h-4zM446 574h4v1h-4zM590 642h4v2h-4zM680 575h4v2h-4zM686 575h4v2h-4zM692 575h4v1h-4zM746 584h4v2h-4zM776 583h4v1h-4zM848 603h4v2h-4zM896 596h4v1h-4zM956 581h4v2h-4zM1004 587h4v2h-4zM1142 617h4v1h-4zM1244 651h4v2h-4zM1406 606h4v1h-4zM1472 577h4v2h-4z" fill="#ff40ff" shape-rendering="crispEdges"/>
<path d="M194 631h4v1h-4zM434 574h4v2h-4zM440 575h4v1h-4zM458 577h4v2h-4zM530 671h4v1h-4zM752 585h4v1h-4zM878 599h4v2h-4zM890 596h4v2h-4zM950 583h4v2h-4zM974 579h4v2h-4zM998 589h4v2h-4zM1154 619h4v2h-4zM1208 632h4v2h-4zM1250 652h4v2h-4zM1256 653h4v1h-4zM1388 600h4v1h-4zM1496 585h4v2h-4z" fill="#60ffff" shape-rendering="crispEdges"/>
<path d="M62 629h3v26h-3zM68 630h3v22h-3zM74 628h3v22h-3zM80 624h3v23h-3zM86 621h3v24h-3zM92 621h3v22h-3zM98 621h3v19h-3zM104 624h3v15h-3zM110 621h3v16h-3zM116 616h3v19h-3zM122 617h3v16h-3zM128 616h3v16h-3zM134 615h3v15h-3zM140 612h3v16h-3zM146 608h3v18h-3zM152 609h3v16h-3zM158 612h3v12h-3zM164 613h3v10h-3zM170 613h3v9h-3zM176 614h3v7h-3zM182 613h3v7h-3zM188 611h3v9h-3zM194 610h3v9h-3zM200 610h3v8h-3zM206 615h3v3h-3zM254 619h3v2h-3zM260 620h3v1h-3zM338 636h3v4h-3zM344 632h3v7h-3zM350 629h3v9h-3zM356 627h3v10h-3zM362 624h3v12h-3zM368 620h3v15h-3zM374 616h3v17h-3zM380 612h3v19h-3zM386 607h3v22h-3zM392 601h3v25h-3zM398 595h3v28h-3zM404 590h3v30h-3zM410 587h3v30h-3zM416 586h3v28h-3zM422 582h3v28h-3zM428 579h3v28h-3zM434 580h3v25h-3zM440 579h3v23h-3zM446 577h3v23h-3zM452 579h3v19h-3zM458 579h3v17h-3zM464 583h3v12h-3zM470 592h3v3h-3zM596 640h3v4h-3zM602 636h3v7h-3zM608 632h3v10h-3zM614 629h3v12h-3zM620 628h3v12h-3zM626 630h3v9h-3zM632 629h3v9h-3zM638 625h3v12h-3zM644 621h3v14h-3zM650 617h3v16h-3zM656 612h3v19h-3zM662 607h3v22h-3zM668 602h3v24h-3zM674 599h3v25h-3zM680 594h3v27h-3zM686 591h3v27h-3zM692 587h3v28h-3zM698 586h3v26h-3zM704 587h3v23h-3zM710 587h3v21h-3zM716 588h3v18h-3zM722 586h3v18h-3zM728 583h3v19h-3zM734 582h3v18h-3zM740 580h3v18h-3zM746 580h3v16h-3zM752 580h3v15h-3zM758 578h3v15h-3zM764 580h3v12h-3zM770 577h3v14h-3zM776 578h3v12h-3zM782 579h3v10h-3zM788 581h3v7h-3zM794 583h3v4h-3zM830 587h3v2h-3zM836 585h3v4h-3zM842 586h3v3h-3zM848 587h3v2h-3zM854 586h3v3h-3zM860 584h3v4h-3zM866 582h3v6h-3zM872 585h3v3h-3zM878 585h3v2h-3zM884 582h3v5h-3zM890 583h3v4h-3zM896 583h3v3h-3zM902 581h3v5h-3zM908 581h3v5h-3zM914 579h3v6h-3zM920 576h3v8h-3zM926 577h3v7h-3zM932 576h3v7h-3zM938 577h3v5h-3zM944 581h3v1h-3zM950 580h3v2h-3zM956 579h3v3h-3zM962 577h3v5h-3zM968 575h3v6h-3zM974 577h3v4h-3zM1004 580h3v1h-3zM1124 603h3v2h-3zM1130 599h3v5h-3zM1136 601h3v3h-3zM1160 603h3v2h-3zM1166 602h3v2h-3zM1310 642h3v6h-3zM1316 630h3v16h-3zM1322 626h3v18h-3zM1328 622h3v20h-3zM1334 617h3v23h-3zM1340 612h3v25h-3zM1346 604h3v30h-3zM1352 603h3v28h-3zM1358 610h3v19h-3zM1364 610h3v17h-3zM1370 611h3v14h-3zM1376 603h3v20h-3zM1382 598h3v23h-3zM1388 602h3v17h-3zM1394 606h3v12h-3zM1400 610h3v7h-3zM1406 606h3v10h-3zM1412 602h3v13h-3zM1418 601h3v13h-3zM1424 599h3v13h-3zM1430 593h3v17h-3zM1436 588h3v20h-3zM1442 586h3v20h-3zM1448 584h3v20h-3zM1454 582h3v20h-3zM1460 579h3v21h-3zM1466 578h3v20h-3zM1472 578h3v18h-3zM1478 580h3v14h-3zM1484 582h3v11h-3zM1490 584h3v8h-3zM1496 582h3v9h-3zM1502 585h3v7h-3z" fill="#ff0000" shape-rendering="crispEdges"/>
<path d="M212 617h3v3h-3zM218 618h3v8h-3zM224 619h3v10h-3zM230 620h3v9h-3zM236 620h3v7h-3zM242 620h3v2h-3zM248 620h3v2h-3zM266 620h3v1h-3zM272 621h3v6h-3zM278 622h3v8h-3zM284 623h3v11h-3zM290 624h3v14h-3zM296 626h3v17h-3zM302 628h3v22h-3zM308 631h3v27h-3zM314 634h3v30h-3zM320 637h3v24h-3zM326 639h3v18h-3zM332 639h3v8h-3zM476 595h3v13h-3zM482 598h3v25h-3zM488 601h3v33h-3zM494 605h3v39h-3zM500 610h3v42h-3zM506 615h3v43h-3zM512 620h3v45h-3zM518 624h3v40h-3zM524 628h3v38h-3zM530 632h3v34h-3zM536 635h3v30h-3zM542 638h3v26h-3zM548 640h3v18h-3zM554 641h3v13h-3zM560 642h3v8h-3zM566 642h3v7h-3zM572 643h3v2h-3zM578 643h3v2h-3zM584 643h3v1h-3zM590 643h3v2h-3zM800 587h3v2h-3zM806 587h3v7h-3zM812 588h3v8h-3zM818 588h3v5h-3zM824 588h3v2h-3zM980 580h3v1h-3zM986 580h3v4h-3zM992 580h3v3h-3zM998 580h3v2h-3zM1010 581h3v3h-3zM1016 581h3v7h-3zM1022 582h3v6h-3zM1028 583h3v7h-3zM1034 583h3v9h-3zM1040 584h3v11h-3zM1046 586h3v14h-3zM1052 588h3v15h-3zM1058 589h3v15h-3zM1064 591h3v16h-3zM1070 592h3v17h-3zM1076 594h3v19h-3zM1082 596h3v21h-3zM1088 599h3v20h-3zM1094 600h3v15h-3zM1100 601h3v12h-3zM1106 603h3v12h-3zM1112 603h3v8h-3zM1118 604h3v6h-3zM1142 603h3v1h-3zM1148 603h3v3h-3zM1154 604h3v3h-3zM1172 603h3v2h-3zM1178 604h3v5h-3zM1184 605h3v9h-3zM1190 607h3v16h-3zM1196 609h3v24h-3zM1202 611h3v22h-3zM1208 613h3v19h-3zM1214 616h3v25h-3zM1220 619h3v31h-3zM1226 623h3v30h-3zM1232 625h3v26h-3zM1238 628h3v25h-3zM1244 630h3v22h-3zM1250 633h3v21h-3zM1256 635h3v19h-3zM1262 637h3v23h-3zM1268 640h3v23h-3zM1274 642h3v24h-3zM1280 644h3v17h-3zM1286 645h3v10h-3zM1292 646h3v7h-3zM1298 647h3v11h-3zM1304 647h3v7h-3zM1508 590h3v3h-3zM1514 591h3v6h-3zM1520 591h3v6h-3zM1526 592h3v4h-3zM1532 592h3v6h-3zM1538 593h3v5h-3z" fill="#30a830" shape-rendering="crispEdges"/>
<g transform="translate(209.5 648.3)"><circle r="7" fill="#fff" stroke="#ff0000" stroke-width="1.2"/><rect x="-3.5" y="-3.3" width="2" height="2" fill="#ff0000"/><rect x="1.6" y="-3.3" width="2" height="2" fill="#ff0000"/><path d="M-4.3 0.9 Q0 5.8 4.3 0.9" fill="none" stroke="#ff0000" stroke-width="1.1"/></g>
<g transform="translate(245.4 662.3)"><circle r="7" fill="#fff" stroke="#ff0000" stroke-width="1.2"/><rect x="-3.5" y="-3.3" width="2" height="2" fill="#ff0000"/><rect x="1.6" y="-3.3" width="2" height="2" fill="#ff0000"/><path d="M-4.3 0.9 Q0 5.8 4.3 0.9" fill="none" stroke="#ff0000" stroke-width="1.1"/></g>
<g transform="translate(329.5 670.4)"><circle r="7" fill="#fff" stroke="#ff0000" stroke-width="1.2"/><rect x="-3.5" y="-3.3" width="2" height="2" fill="#ff0000"/><rect x="1.6" y="-3.3" width="2" height="2" fill="#ff0000"/><path d="M-4.3 0.9 Q0 5.8 4.3 0.9" fill="none" stroke="#ff0000" stroke-width="1.1"/></g>
<g transform="translate(545.5 674)"><circle r="7" fill="#fff" stroke="#ff0000" stroke-width="1.2"/><rect x="-3.5" y="-3.3" width="2" height="2" fill="#ff0000"/><rect x="1.6" y="-3.3" width="2" height="2" fill="#ff0000"/><path d="M-4.3 0.9 Q0 5.8 4.3 0.9" fill="none" stroke="#ff0000" stroke-width="1.1"/></g>
<g transform="translate(1103.6 668.3)"><circle r="7" fill="#fff" stroke="#ff0000" stroke-width="1.2"/><rect x="-3.5" y="-3.3" width="2" height="2" fill="#ff0000"/><rect x="1.6" y="-3.3" width="2" height="2" fill="#ff0000"/><path d="M-4.3 0.9 Q0 5.8 4.3 0.9" fill="none" stroke="#ff0000" stroke-width="1.1"/></g>
<g transform="translate(1253.5 664.3)"><circle r="7" fill="#fff" stroke="#ff0000" stroke-width="1.2"/><rect x="-3.5" y="-3.3" width="2" height="2" fill="#ff0000"/><rect x="1.6" y="-3.3" width="2" height="2" fill="#ff0000"/><path d="M-4.3 0.9 Q0 5.8 4.3 0.9" fill="none" stroke="#ff0000" stroke-width="1.1"/></g>
<g transform="translate(1289.6 667.3)"><circle r="7" fill="#fff" stroke="#ff0000" stroke-width="1.2"/><rect x="-3.5" y="-3.3" width="2" height="2" fill="#ff0000"/><rect x="1.6" y="-3.3" width="2" height="2" fill="#ff0000"/><path d="M-4.3 0.9 Q0 5.8 4.3 0.9" fill="none" stroke="#ff0000" stroke-width="1.1"/></g>
<g transform="translate(1313.5 661.3)"><circle r="7" fill="#fff" stroke="#ff0000" stroke-width="1.2"/><rect x="-3.5" y="-3.3" width="2" height="2" fill="#ff0000"/><rect x="1.6" y="-3.3" width="2" height="2" fill="#ff0000"/><path d="M-4.3 0.9 Q0 5.8 4.3 0.9" fill="none" stroke="#ff0000" stroke-width="1.1"/></g>
<path d="M64.5 698.5 l4.5 -8.5 l4.5 8.5z" fill="#e0e0e0"/>
<text x="73" y="698" font-size="9" fill="#e0e0e0" text-anchor="start" font-weight="normal">★</text>
<text x="82" y="698" font-size="12.3" fill="#e0e0e0" text-anchor="start" font-weight="normal">大趋势</text>
<text x="124" y="698" font-size="12.3" fill="#ffffff" text-anchor="start" font-weight="normal">获利回吐:0.9101</text>
<text x="219" y="698" font-size="12.3" fill="#70ffd0" text-anchor="start" font-weight="normal">空头回补:0.0000</text>
<text x="314" y="698" font-size="12.3" fill="#6000d0" text-anchor="start" font-weight="normal">坚绝做空:0.0000</text>
<text x="409" y="698" font-size="12.3" fill="#ff1010" text-anchor="start" font-weight="normal">买入持货:0.7171</text>
<line x1="63" y1="721.5" x2="1657" y2="721.5" stroke="#c00000" stroke-width="1" stroke-dasharray="1 1" shape-rendering="crispEdges"/>
<line x1="63" y1="776.5" x2="1657" y2="776.5" stroke="#c00000" stroke-width="1" stroke-dasharray="1 1" shape-rendering="crispEdges"/>
<text x="57" y="725.5" font-size="13.5" fill="#d8d8d8" text-anchor="end" font-weight="bold" style="font-family:'Liberation Serif','Noto Serif CJK SC',serif">1.2</text>
<text x="57" y="780.5" font-size="13.5" fill="#d8d8d8" text-anchor="end" font-weight="bold" style="font-family:'Liberation Serif','Noto Serif CJK SC',serif">0</text>
<path d="M63 764h2v13h-2zM69 764h2v13h-2zM75 764h2v13h-2zM81 764h2v13h-2zM87 766h2v11h-2zM93 767h2v10h-2zM99 767h2v10h-2zM105 769h2v8h-2zM111 769h2v8h-2zM117 769h2v8h-2zM123 769h2v8h-2zM129 769h2v8h-2zM135 769h2v8h-2zM141 769h2v8h-2zM147 767h2v10h-2zM153 769h2v8h-2zM159 770h2v7h-2zM165 770h2v7h-2zM171 770h2v7h-2zM177 772h2v5h-2zM183 772h2v5h-2zM189 772h2v5h-2zM195 772h2v5h-2zM201 772h2v5h-2zM207 773h2v4h-2zM213 774h2v3h-2zM357 775h2v2h-2zM363 774h2v3h-2zM369 773h2v4h-2zM375 772h2v5h-2zM381 770h2v7h-2zM387 769h2v8h-2zM393 767h2v10h-2zM399 764h2v13h-2zM405 762h2v15h-2zM411 761h2v16h-2zM417 761h2v16h-2zM423 758h2v19h-2zM429 755h2v22h-2zM435 753h2v24h-2zM441 751h2v26h-2zM447 749h2v28h-2zM453 749h2v28h-2zM459 747h2v30h-2zM465 749h2v28h-2zM471 751h2v26h-2zM477 755h2v22h-2zM483 761h2v16h-2zM489 767h2v10h-2zM495 774h2v3h-2zM609 772h2v5h-2zM615 770h2v7h-2zM621 769h2v8h-2zM627 770h2v7h-2zM633 770h2v7h-2zM639 766h2v11h-2zM645 763h2v14h-2zM651 761h2v16h-2zM657 757h2v20h-2zM663 753h2v24h-2zM669 749h2v28h-2zM675 748h2v29h-2zM681 745h2v32h-2zM687 744h2v33h-2zM693 742h2v35h-2zM699 742h2v35h-2zM705 744h2v33h-2zM711 746h2v31h-2zM717 746h2v31h-2zM723 747h2v30h-2zM729 746h2v31h-2zM735 745h2v32h-2zM741 742h2v35h-2zM747 741h2v36h-2zM753 741h2v36h-2zM759 740h2v37h-2zM765 742h2v35h-2zM771 739h2v38h-2zM777 739h2v38h-2zM783 740h2v37h-2zM789 741h2v36h-2zM795 742h2v35h-2zM801 744h2v33h-2zM807 748h2v29h-2zM813 751h2v26h-2zM819 752h2v25h-2zM825 752h2v25h-2zM831 751h2v26h-2zM837 748h2v29h-2zM843 748h2v29h-2zM849 749h2v28h-2zM855 748h2v29h-2zM861 746h2v31h-2zM867 745h2v32h-2zM873 748h2v29h-2zM879 748h2v29h-2zM885 746h2v31h-2zM891 748h2v29h-2zM897 748h2v29h-2zM903 748h2v29h-2zM909 748h2v29h-2zM915 746h2v31h-2zM921 739h2v38h-2zM927 737h2v40h-2zM933 734h2v43h-2zM939 733h2v44h-2zM945 736h2v41h-2zM951 735h2v42h-2zM957 734h2v43h-2zM963 734h2v43h-2zM969 733h2v44h-2zM975 735h2v42h-2zM981 736h2v41h-2zM987 738h2v39h-2zM993 739h2v38h-2zM999 741h2v36h-2zM1005 742h2v35h-2zM1011 743h2v34h-2zM1017 746h2v31h-2zM1023 748h2v29h-2zM1029 750h2v27h-2zM1035 753h2v24h-2zM1041 755h2v22h-2zM1047 759h2v18h-2zM1053 762h2v15h-2zM1059 765h2v12h-2zM1065 768h2v9h-2zM1071 770h2v7h-2zM1077 773h2v4h-2zM1113 773h2v4h-2zM1119 772h2v5h-2zM1125 767h2v10h-2zM1131 764h2v13h-2zM1137 765h2v12h-2zM1143 767h2v10h-2zM1149 768h2v9h-2zM1155 768h2v9h-2zM1161 766h2v11h-2zM1167 766h2v11h-2zM1173 767h2v10h-2zM1179 768h2v9h-2zM1185 768h2v9h-2zM1191 770h2v7h-2zM1197 772h2v5h-2zM1203 774h2v3h-2zM1209 775h2v2h-2zM1317 771h2v6h-2zM1323 770h2v7h-2zM1329 768h2v9h-2zM1335 766h2v11h-2zM1341 763h2v14h-2zM1347 757h2v20h-2zM1353 757h2v20h-2zM1359 760h2v17h-2zM1365 760h2v17h-2zM1371 761h2v16h-2zM1377 757h2v20h-2zM1383 753h2v24h-2zM1389 755h2v22h-2zM1395 757h2v20h-2zM1401 758h2v19h-2zM1407 757h2v20h-2zM1413 755h2v22h-2zM1419 755h2v22h-2zM1425 755h2v22h-2zM1431 749h2v28h-2zM1437 741h2v36h-2zM1443 735h2v42h-2zM1449 729h2v48h-2zM1455 717h2v60h-2zM1461 708h2v69h-2zM1467 702h2v75h-2zM1473 700h2v77h-2zM1479 701h2v76h-2zM1485 705h2v72h-2zM1491 708h2v69h-2zM1497 708h2v69h-2zM1503 710h2v67h-2zM1509 714h2v63h-2zM1515 719h2v58h-2zM1521 724h2v53h-2zM1527 727h2v50h-2zM1533 730h2v47h-2zM1539 734h2v43h-2z" fill="#ffffff" shape-rendering="crispEdges"/>
<path d="M63 764h2v13h-2zM69 764h2v13h-2zM75 764h2v13h-2zM81 764h2v13h-2zM87 766h2v11h-2zM93 768h2v9h-2zM99 769h2v8h-2zM105 771h2v6h-2zM111 770h2v7h-2zM117 769h2v8h-2zM123 769h2v8h-2zM129 770h2v7h-2zM135 770h2v7h-2zM141 769h2v8h-2zM147 767h2v10h-2zM153 769h2v8h-2zM159 772h2v5h-2zM165 772h2v5h-2zM171 773h2v4h-2zM177 774h2v3h-2zM183 773h2v4h-2zM189 773h2v4h-2zM195 772h2v5h-2zM201 773h2v4h-2zM207 775h2v2h-2zM357 775h2v2h-2zM363 774h2v3h-2zM369 773h2v4h-2zM375 772h2v5h-2zM381 770h2v7h-2zM387 769h2v8h-2zM393 767h2v10h-2zM399 764h2v13h-2zM405 762h2v15h-2zM411 761h2v16h-2zM417 761h2v16h-2zM423 758h2v19h-2zM429 755h2v22h-2zM435 753h2v24h-2zM441 751h2v26h-2zM447 749h2v28h-2zM453 749h2v28h-2zM459 747h2v30h-2zM465 749h2v28h-2zM471 754h2v23h-2zM477 764h2v13h-2zM483 775h2v2h-2zM609 772h2v5h-2zM615 770h2v7h-2zM621 769h2v8h-2zM627 770h2v7h-2zM633 770h2v7h-2zM639 766h2v11h-2zM645 763h2v14h-2zM651 761h2v16h-2zM657 757h2v20h-2zM663 753h2v24h-2zM669 749h2v28h-2zM675 748h2v29h-2zM681 745h2v32h-2zM687 744h2v33h-2zM693 742h2v35h-2zM699 742h2v35h-2zM705 744h2v33h-2zM711 746h2v31h-2zM717 748h2v29h-2zM723 748h2v29h-2zM729 746h2v31h-2zM735 745h2v32h-2zM741 742h2v35h-2zM747 741h2v36h-2zM753 741h2v36h-2zM759 740h2v37h-2zM765 742h2v35h-2zM771 739h2v38h-2zM777 739h2v38h-2zM783 740h2v37h-2zM789 742h2v35h-2zM795 745h2v32h-2zM801 750h2v27h-2zM807 756h2v21h-2zM813 758h2v19h-2zM819 756h2v21h-2zM825 753h2v24h-2zM831 751h2v26h-2zM837 748h2v29h-2zM843 748h2v29h-2zM849 749h2v28h-2zM855 748h2v29h-2zM861 746h2v31h-2zM867 745h2v32h-2zM873 748h2v29h-2zM879 749h2v28h-2zM885 746h2v31h-2zM891 748h2v29h-2zM897 749h2v28h-2zM903 748h2v29h-2zM909 748h2v29h-2zM915 746h2v31h-2zM921 739h2v38h-2zM927 737h2v40h-2zM933 734h2v43h-2zM939 733h2v44h-2zM945 736h2v41h-2zM951 735h2v42h-2zM957 734h2v43h-2zM963 734h2v43h-2zM969 733h2v44h-2zM975 735h2v42h-2zM981 740h2v37h-2zM987 743h2v34h-2zM993 743h2v34h-2zM999 744h2v33h-2zM1005 744h2v33h-2zM1011 747h2v30h-2zM1017 752h2v25h-2zM1023 753h2v24h-2zM1029 756h2v21h-2zM1035 759h2v18h-2zM1041 762h2v15h-2zM1047 767h2v10h-2zM1053 771h2v6h-2zM1059 772h2v5h-2zM1065 775h2v2h-2zM1113 773h2v4h-2zM1119 772h2v5h-2zM1125 767h2v10h-2zM1131 764h2v13h-2zM1137 765h2v12h-2zM1143 767h2v10h-2zM1149 768h2v9h-2zM1155 769h2v8h-2zM1161 766h2v11h-2zM1167 766h2v11h-2zM1173 767h2v10h-2zM1179 769h2v8h-2zM1185 771h2v6h-2zM1191 774h2v3h-2zM1317 771h2v6h-2zM1323 770h2v7h-2zM1329 768h2v9h-2zM1335 766h2v11h-2zM1341 763h2v14h-2zM1347 757h2v20h-2zM1353 757h2v20h-2zM1359 760h2v17h-2zM1365 760h2v17h-2zM1371 761h2v16h-2zM1377 757h2v20h-2zM1383 753h2v24h-2zM1389 755h2v22h-2zM1395 757h2v20h-2zM1401 759h2v18h-2zM1407 757h2v20h-2zM1413 755h2v22h-2zM1419 755h2v22h-2zM1425 755h2v22h-2zM1431 749h2v28h-2zM1437 741h2v36h-2zM1443 735h2v42h-2zM1449 729h2v48h-2zM1455 717h2v60h-2zM1461 708h2v69h-2zM1467 702h2v75h-2zM1473 700h2v77h-2zM1479 701h2v76h-2zM1485 705h2v72h-2zM1491 708h2v69h-2zM1497 708h2v69h-2zM1503 714h2v63h-2zM1509 725h2v52h-2zM1515 732h2v45h-2zM1521 735h2v42h-2zM1527 735h2v42h-2zM1533 740h2v37h-2zM1539 743h2v34h-2z" fill="#ff0000" shape-rendering="crispEdges"/>
<path d="M213 777h2v3h-2zM219 777h2v6h-2zM225 777h2v8h-2zM231 777h2v8h-2zM237 777h2v6h-2zM243 777h2v4h-2zM249 777h2v4h-2zM255 777h2v3h-2zM261 777h2v3h-2zM267 777h2v3h-2zM273 777h2v5h-2zM279 777h2v5h-2zM285 777h2v6h-2zM291 777h2v6h-2zM297 777h2v8h-2zM303 777h2v9h-2zM309 777h2v11h-2zM315 777h2v14h-2zM321 777h2v12h-2zM327 777h2v10h-2zM333 777h2v9h-2zM339 777h2v8h-2zM345 777h2v6h-2zM351 777h2v4h-2zM357 777h2v3h-2zM363 777h2v2h-2zM489 777h2v7h-2zM495 777h2v16h-2zM501 777h2v22h-2zM507 777h2v26h-2zM513 777h2v32h-2zM519 777h2v32h-2zM525 777h2v34h-2zM531 777h2v34h-2zM537 777h2v33h-2zM543 777h2v31h-2zM549 777h2v28h-2zM555 777h2v26h-2zM561 777h2v23h-2zM567 777h2v21h-2zM573 777h2v18h-2zM579 777h2v16h-2zM585 777h2v14h-2zM591 777h2v12h-2zM597 777h2v10h-2zM603 777h2v8h-2zM609 777h2v5h-2zM615 777h2v2h-2zM1071 777h2v2h-2zM1077 777h2v5h-2zM1083 777h2v9h-2zM1089 777h2v11h-2zM1095 777h2v6h-2zM1101 777h2v4h-2zM1107 777h2v4h-2zM1113 777h2v2h-2zM1197 777h2v3h-2zM1203 777h2v3h-2zM1209 777h2v2h-2zM1215 777h2v6h-2zM1221 777h2v10h-2zM1227 777h2v11h-2zM1233 777h2v10h-2zM1239 777h2v11h-2zM1245 777h2v10h-2zM1251 777h2v11h-2zM1257 777h2v11h-2zM1263 777h2v13h-2zM1269 777h2v14h-2zM1275 777h2v15h-2zM1281 777h2v12h-2zM1287 777h2v11h-2zM1293 777h2v10h-2zM1299 777h2v10h-2zM1305 777h2v9h-2zM1311 777h2v7h-2zM1317 777h2v4h-2z" fill="#80ffd8" shape-rendering="crispEdges"/>
<path d="M213 777h2v3h-2zM219 777h2v6h-2zM225 777h2v8h-2zM231 777h2v8h-2zM237 777h2v6h-2zM243 777h2v3h-2zM249 777h2v3h-2zM273 777h2v5h-2zM279 777h2v5h-2zM285 777h2v6h-2zM291 777h2v6h-2zM297 777h2v8h-2zM303 777h2v9h-2zM309 777h2v11h-2zM315 777h2v14h-2zM321 777h2v12h-2zM327 777h2v10h-2zM333 777h2v6h-2zM339 777h2v4h-2zM345 777h2v3h-2zM489 777h2v7h-2zM495 777h2v16h-2zM501 777h2v22h-2zM507 777h2v26h-2zM513 777h2v32h-2zM519 777h2v32h-2zM525 777h2v34h-2zM531 777h2v34h-2zM537 777h2v33h-2zM543 777h2v31h-2zM549 777h2v25h-2zM555 777h2v21h-2zM561 777h2v16h-2zM567 777h2v15h-2zM573 777h2v11h-2zM579 777h2v10h-2zM585 777h2v9h-2zM591 777h2v9h-2zM597 777h2v5h-2zM1071 777h2v2h-2zM1077 777h2v5h-2zM1083 777h2v9h-2zM1089 777h2v11h-2zM1095 777h2v6h-2zM1101 777h2v2h-2zM1107 777h2v2h-2zM1197 777h2v3h-2zM1203 777h2v3h-2zM1209 777h2v2h-2zM1215 777h2v6h-2zM1221 777h2v10h-2zM1227 777h2v11h-2zM1233 777h2v10h-2zM1239 777h2v11h-2zM1245 777h2v10h-2zM1251 777h2v11h-2zM1257 777h2v11h-2zM1263 777h2v13h-2zM1269 777h2v14h-2zM1275 777h2v15h-2zM1281 777h2v12h-2zM1287 777h2v9h-2zM1293 777h2v8h-2zM1299 777h2v9h-2zM1305 777h2v7h-2zM1311 777h2v2h-2z" fill="#6000d0" shape-rendering="crispEdges"/>
<rect x="1630.5" y="721.5" width="27" height="16" fill="#0060ff" stroke="#ffffff" stroke-width="1" shape-rendering="crispEdges"/>
<text x="1643.5" y="734" font-size="11.5" fill="#fff" text-anchor="middle" font-weight="normal">0.83</text>
<text x="64" y="827" font-size="9" fill="#e0e0e0" text-anchor="start" font-weight="normal">★</text>
<text x="71" y="827" font-size="12.3" fill="#e0e0e0" text-anchor="start" font-weight="normal">奥运冠军</text>
<text x="124" y="827" font-size="12.3" fill="#ffffff" text-anchor="start" font-weight="normal">奥运:-2.9026</text>
<text x="199" y="827" font-size="12.3" fill="#ffff00" text-anchor="start" font-weight="normal">冠军:-1.7920</text>
<line x1="63" y1="891.5" x2="1657" y2="891.5" stroke="#c00000" stroke-width="1" stroke-dasharray="1 1" shape-rendering="crispEdges"/>
<text x="57" y="895.5" font-size="13.5" fill="#d8d8d8" text-anchor="end" font-weight="bold" style="font-family:'Liberation Serif','Noto Serif CJK SC',serif">0</text>
<path d="M64 862h1v6h-1zM70 868h1v7h-1zM76 872h1v5h-1zM82 875h1v3h-1zM88 877h1v4h-1zM94 882h1v6h-1zM100 887h1v4h-1zM106 894h1v6h-1zM154 882h1v2h-1zM160 888h1v6h-1zM166 890h1v4h-1zM172 892h1v3h-1zM178 893h1v3h-1zM208 893h1v7h-1zM214 902h1v9h-1zM220 910h1v10h-1zM226 916h1v6h-1zM268 888h1v2h-1zM274 895h1v7h-1zM280 898h1v4h-1zM286 900h1v2h-1zM292 901h1v3h-1zM298 904h1v4h-1zM304 908h1v5h-1zM310 914h1v6h-1zM316 920h1v7h-1zM418 841h1v3h-1zM454 835h1v5h-1zM460 838h1v3h-1zM466 849h1v12h-1zM472 867h1v19h-1zM478 888h1v22h-1zM484 907h1v19h-1zM490 919h1v12h-1zM496 928h1v10h-1zM502 933h1v7h-1zM508 936h1v4h-1zM514 939h1v4h-1zM586 880h1v1h-1zM592 882h1v3h-1zM628 873h1v6h-1zM634 875h1v4h-1zM700 847h1v3h-1zM706 853h1v8h-1zM712 860h1v8h-1zM718 866h1v7h-1zM724 868h1v3h-1zM754 854h1v2h-1zM766 859h1v7h-1zM772 860h1v3h-1zM778 863h1v3h-1zM784 865h1v4h-1zM790 869h1v5h-1zM796 875h1v6h-1zM802 883h1v9h-1zM808 892h1v10h-1zM814 896h1v4h-1zM850 871h1v2h-1zM874 870h1v6h-1zM880 873h1v4h-1zM892 874h1v4h-1zM898 876h1v3h-1zM946 864h1v6h-1zM952 866h1v3h-1zM958 867h1v2h-1zM976 867h1v3h-1zM982 873h1v7h-1zM988 878h1v7h-1zM994 880h1v2h-1zM1012 881h1v3h-1zM1018 887h1v8h-1zM1024 889h1v3h-1zM1030 892h1v4h-1zM1036 894h1v3h-1zM1042 897h1v4h-1zM1048 903h1v7h-1zM1054 907h1v5h-1zM1066 907h1v2h-1zM1072 909h1v2h-1zM1078 911h1v4h-1zM1084 914h1v5h-1zM1090 917h1v4h-1zM1138 872h1v4h-1zM1144 876h1v5h-1zM1150 880h1v5h-1zM1156 883h1v4h-1zM1174 882h1v3h-1zM1180 886h1v4h-1zM1186 890h1v5h-1zM1192 897h1v8h-1zM1198 905h1v9h-1zM1216 904h1v4h-1zM1222 909h1v5h-1zM1228 911h1v3h-1zM1264 902h1v3h-1zM1270 904h1v3h-1zM1276 906h1v3h-1zM1300 892h1v3h-1zM1354 865h1v1h-1zM1360 872h1v7h-1zM1366 876h1v6h-1zM1372 879h1v5h-1zM1390 875h1v3h-1zM1396 879h1v4h-1zM1402 883h1v5h-1zM1474 834h1v1h-1zM1480 837h1v4h-1zM1486 844h1v8h-1zM1492 851h1v8h-1zM1498 854h1v5h-1zM1504 863h1v10h-1zM1510 877h1v14h-1zM1516 886h1v11h-1zM1522 890h1v5h-1zM1534 891h1v2h-1zM1540 892h1v2h-1z" fill="#ffff00" shape-rendering="crispEdges"/>
<path d="M112 893h1v1h-1zM118 886h1v5h-1zM124 889h1v1h-1zM130 889h1v1h-1zM136 888h1v1h-1zM142 882h1v4h-1zM148 877h1v5h-1zM184 892h1v2h-1zM190 888h1v3h-1zM196 884h1v4h-1zM202 887h1v1h-1zM232 914h1v2h-1zM238 902h1v7h-1zM244 888h1v11h-1zM250 887h1v7h-1zM256 885h1v5h-1zM262 887h1v2h-1zM322 909h1v6h-1zM328 898h1v9h-1zM334 884h1v12h-1zM340 874h1v11h-1zM346 874h1v6h-1zM352 875h1v3h-1zM358 876h1v2h-1zM364 875h1v2h-1zM370 873h1v2h-1zM376 868h1v4h-1zM382 864h1v5h-1zM388 859h1v5h-1zM394 852h1v7h-1zM400 844h1v8h-1zM406 838h1v8h-1zM412 835h1v6h-1zM424 838h1v3h-1zM430 834h1v4h-1zM436 834h1v2h-1zM442 833h1v2h-1zM448 829h1v4h-1zM520 932h1v5h-1zM526 928h1v5h-1zM532 925h1v4h-1zM538 916h1v7h-1zM544 910h1v7h-1zM550 895h1v12h-1zM556 886h1v11h-1zM562 879h1v10h-1zM568 880h1v5h-1zM574 876h1v5h-1zM580 878h1v2h-1zM598 876h1v4h-1zM604 872h1v4h-1zM610 865h1v6h-1zM616 865h1v3h-1zM622 867h1v1h-1zM640 872h1v3h-1zM646 867h1v5h-1zM652 864h1v4h-1zM658 857h1v6h-1zM664 851h1v7h-1zM670 846h1v6h-1zM676 848h1v3h-1zM682 846h1v3h-1zM688 845h1v2h-1zM694 843h1v2h-1zM730 862h1v4h-1zM736 857h1v5h-1zM742 847h1v8h-1zM748 852h1v2h-1zM760 853h1v1h-1zM820 889h1v4h-1zM826 880h1v7h-1zM832 874h1v7h-1zM838 867h1v8h-1zM844 868h1v4h-1zM856 869h1v2h-1zM862 865h1v4h-1zM868 863h1v3h-1zM886 871h1v2h-1zM904 876h1v1h-1zM910 876h1v1h-1zM916 871h1v3h-1zM922 860h1v8h-1zM928 860h1v4h-1zM934 857h1v4h-1zM940 860h1v1h-1zM964 867h1v1h-1zM970 865h1v2h-1zM1000 879h1v1h-1zM1006 876h1v3h-1zM1060 906h1v2h-1zM1096 899h1v10h-1zM1102 888h1v11h-1zM1108 885h1v8h-1zM1114 877h1v9h-1zM1120 876h1v5h-1zM1126 868h1v7h-1zM1132 866h1v5h-1zM1162 880h1v3h-1zM1168 880h1v2h-1zM1204 905h1v1h-1zM1210 898h1v5h-1zM1234 904h1v5h-1zM1240 904h1v3h-1zM1246 900h1v4h-1zM1252 900h1v2h-1zM1258 899h1v2h-1zM1282 896h1v6h-1zM1288 887h1v8h-1zM1294 887h1v4h-1zM1306 888h1v3h-1zM1312 877h1v8h-1zM1318 868h1v9h-1zM1324 871h1v4h-1zM1330 871h1v2h-1zM1336 871h1v2h-1zM1342 867h1v3h-1zM1348 859h1v6h-1zM1378 875h1v3h-1zM1384 870h1v5h-1zM1408 881h1v2h-1zM1414 877h1v4h-1zM1420 878h1v2h-1zM1426 877h1v2h-1zM1432 868h1v6h-1zM1438 856h1v10h-1zM1444 851h1v8h-1zM1450 845h1v8h-1zM1456 836h1v9h-1zM1462 831h1v7h-1zM1468 830h1v5h-1zM1528 889h1v2h-1z" fill="#ff0000" shape-rendering="crispEdges"/>
<rect x="1" y="813" width="60" height="132" fill="none" stroke="#c81e1e" stroke-width="2" shape-rendering="crispEdges"/>
<text x="57" y="958" font-size="12" fill="#e8e8e8" text-anchor="end" font-weight="normal">周线</text>
<text x="62" y="957.5" font-size="11" fill="#d8d8d8" text-anchor="start" font-weight="normal">201811</text>
<text x="135" y="957.5" font-size="11" fill="#d8d8d8" text-anchor="start" font-weight="normal">201903</text>
<text x="201" y="957.5" font-size="11" fill="#d8d8d8" text-anchor="start" font-weight="normal">05</text>
<text x="279" y="957.5" font-size="11" fill="#d8d8d8" text-anchor="start" font-weight="normal">08</text>
<text x="357" y="957.5" font-size="11" fill="#d8d8d8" text-anchor="start" font-weight="normal">11</text>
<text x="429" y="957.5" font-size="11" fill="#d8d8d8" text-anchor="start" font-weight="normal">202002</text>
<text x="512" y="957.5" font-size="11" fill="#d8d8d8" text-anchor="start" font-weight="normal">05</text>
<text x="596" y="957.5" font-size="11" fill="#d8d8d8" text-anchor="start" font-weight="normal">08</text>
<text x="674" y="957.5" font-size="11" fill="#d8d8d8" text-anchor="start" font-weight="normal">11</text>
<text x="741" y="957.5" font-size="11" fill="#d8d8d8" text-anchor="start" font-weight="normal">202102</text>
<text x="830" y="957.5" font-size="11" fill="#d8d8d8" text-anchor="start" font-weight="normal">05</text>
<text x="908" y="957.5" font-size="11" fill="#d8d8d8" text-anchor="start" font-weight="normal">08</text>
<text x="986" y="957.5" font-size="11" fill="#d8d8d8" text-anchor="start" font-weight="normal">11</text>
<text x="1053" y="957.5" font-size="11" fill="#d8d8d8" text-anchor="start" font-weight="normal">202202</text>
<text x="1143" y="957.5" font-size="11" fill="#d8d8d8" text-anchor="start" font-weight="normal">05</text>
<text x="1221" y="957.5" font-size="11" fill="#d8d8d8" text-anchor="start" font-weight="normal">08</text>
<text x="1300" y="957.5" font-size="11" fill="#d8d8d8" text-anchor="start" font-weight="normal">1</text>
<text x="1397" y="957.5" font-size="11" fill="#d8d8d8" text-anchor="start" font-weight="normal">2</text>
<text x="1430" y="957.5" font-size="11" fill="#d8d8d8" text-anchor="start" font-weight="normal">04</text>
<text x="1509" y="957.5" font-size="11" fill="#d8d8d8" text-anchor="start" font-weight="normal">07</text>
<rect x="1307" y="946" width="88" height="15" fill="#0060ff" shape-rendering="crispEdges"/>
<text x="1351" y="958" font-size="12.5" fill="#fff" text-anchor="middle" font-weight="normal">2022-11-04(五)</text>
<text x="1771" y="18" font-size="18" fill="#ffff00" text-anchor="middle" font-weight="bold" style="font-family:'Liberation Serif','Noto Serif CJK SC',serif">No11糖连(SGNC)</text>
<rect x="1881.5" y="1.5" width="15" height="12" fill="none" stroke="#7fbfff" stroke-width="1" shape-rendering="crispEdges"/>
<rect x="1884.5" y="4.5" width="9" height="6" fill="none" stroke="#7fbfff" stroke-width="1" shape-rendering="crispEdges"/>
<rect x="1659" y="24" width="99" height="5" fill="#ff4040" shape-rendering="crispEdges"/>
<rect x="1758" y="24" width="140" height="5" fill="#00e000" shape-rendering="crispEdges"/>
<line x1="1658" y1="60.5" x2="1898" y2="60.5" stroke="#c81e1e" stroke-width="1" shape-rendering="crispEdges"/>
<line x1="1658" y1="91.5" x2="1898" y2="91.5" stroke="#c81e1e" stroke-width="1" shape-rendering="crispEdges"/>
<line x1="1658" y1="192.5" x2="1898" y2="192.5" stroke="#c81e1e" stroke-width="1" shape-rendering="crispEdges"/>
<text x="1662" y="50.5" font-size="15" fill="#fff" text-anchor="start" font-weight="normal">卖出</text>
<text x="1771" y="52.5" font-size="22" fill="#ff4040" text-anchor="end" font-weight="bold">24.15</text>
<text x="1786" y="52.5" font-size="22" fill="#ffff00" text-anchor="start" font-weight="bold">28</text>
<text x="1662" y="80.5" font-size="15" fill="#fff" text-anchor="start" font-weight="normal">买入</text>
<text x="1771" y="82.5" font-size="22" fill="#ff4040" text-anchor="end" font-weight="bold">24.14</text>
<text x="1786" y="82.5" font-size="22" fill="#ffff00" text-anchor="start" font-weight="bold">20</text>
<text x="1662" y="107.0" font-size="15" fill="#fff" text-anchor="start" font-weight="normal">最新</text>
<text x="1771" y="106.5" font-size="14" fill="#ff4040" text-anchor="end" font-weight="bold">24.14</text>
<text x="1785" y="107.0" font-size="15" fill="#fff" text-anchor="start" font-weight="normal">均价</text>
<text x="1893" y="106.5" font-size="14" fill="#ff4040" text-anchor="end" font-weight="bold">24.03</text>
<text x="1662" y="127.0" font-size="15" fill="#fff" text-anchor="start" font-weight="normal">涨跌</text>
<text x="1771" y="126.5" font-size="14" fill="#ff4040" text-anchor="end" font-weight="bold">0.22</text>
<text x="1785" y="127.0" font-size="15" fill="#fff" text-anchor="start" font-weight="normal">昨结</text>
<text x="1893" y="126.5" font-size="14" fill="#fff" text-anchor="end" font-weight="bold">23.92</text>
<text x="1662" y="147.0" font-size="15" fill="#fff" text-anchor="start" font-weight="normal">幅度</text>
<text x="1771" y="146.5" font-size="14" fill="#ff4040" text-anchor="end" font-weight="bold">0.92%</text>
<text x="1785" y="147.0" font-size="15" fill="#fff" text-anchor="start" font-weight="normal">开盘</text>
<text x="1893" y="146.5" font-size="14" fill="#ff4040" text-anchor="end" font-weight="bold">23.95</text>
<text x="1662" y="167.0" font-size="15" fill="#fff" text-anchor="start" font-weight="normal">总手</text>
<text x="1771" y="166.5" font-size="14" fill="#ffff00" text-anchor="end" font-weight="bold">43890</text>
<text x="1785" y="167.0" font-size="15" fill="#fff" text-anchor="start" font-weight="normal">最高</text>
<text x="1893" y="166.5" font-size="14" fill="#ff4040" text-anchor="end" font-weight="bold">24.19</text>
<text x="1662" y="187.0" font-size="15" fill="#fff" text-anchor="start" font-weight="normal">持仓</text>
<text x="1771" y="186.5" font-size="14" fill="#ffff00" text-anchor="end" font-weight="bold">396035</text>
<text x="1785" y="187.0" font-size="15" fill="#fff" text-anchor="start" font-weight="normal">最低</text>
<text x="1893" y="186.5" font-size="14" fill="#00e000" text-anchor="end" font-weight="bold">23.84</text>
<text x="1662" y="209" font-size="15" fill="#808080" text-anchor="start" font-weight="normal">北京</text>
<text x="1799" y="209" font-size="15" fill="#808080" text-anchor="end" font-weight="normal">价格</text>
<text x="1894" y="209" font-size="15" fill="#808080" text-anchor="end" font-weight="normal">现手</text>
<text x="1663" y="231" font-size="14" fill="#fff" text-anchor="start" font-weight="bold">00:59</text>
<text x="1800" y="231" font-size="14" fill="#ff4040" text-anchor="end" font-weight="bold">24.14</text>
<text x="1894" y="231" font-size="14" fill="#fff" text-anchor="end" font-weight="bold">0</text>
<text x="1680" y="252" font-size="11.5" fill="#d0d0d0" text-anchor="start" font-weight="normal">:01</text>
<text x="1800" y="253" font-size="14" fill="#ff4040" text-anchor="end" font-weight="bold">24.13</text>
<text x="1894" y="253" font-size="14" fill="#00e000" text-anchor="end" font-weight="bold">15</text>
<text x="1680" y="274" font-size="11.5" fill="#d0d0d0" text-anchor="start" font-weight="normal">:02</text>
<text x="1800" y="275" font-size="14" fill="#ff4040" text-anchor="end" font-weight="bold">24.13</text>
<text x="1894" y="275" font-size="14" fill="#00e000" text-anchor="end" font-weight="bold">2</text>
<text x="1680" y="296" font-size="11.5" fill="#d0d0d0" text-anchor="start" font-weight="normal">:06</text>
<text x="1800" y="297" font-size="14" fill="#ff4040" text-anchor="end" font-weight="bold">24.14</text>
<text x="1894" y="297" font-size="14" fill="#ff4040" text-anchor="end" font-weight="bold">42</text>
<text x="1680" y="318" font-size="11.5" fill="#d0d0d0" text-anchor="start" font-weight="normal">:08</text>
<text x="1800" y="319" font-size="14" fill="#ff4040" text-anchor="end" font-weight="bold">24.14</text>
<text x="1894" y="319" font-size="14" fill="#00e000" text-anchor="end" font-weight="bold">15</text>
<text x="1680" y="340" font-size="11.5" fill="#d0d0d0" text-anchor="start" font-weight="normal">:12</text>
<text x="1800" y="341" font-size="14" fill="#ff4040" text-anchor="end" font-weight="bold">24.14</text>
<text x="1894" y="341" font-size="14" fill="#00e000" text-anchor="end" font-weight="bold">20</text>
<text x="1680" y="362" font-size="11.5" fill="#d0d0d0" text-anchor="start" font-weight="normal">:14</text>
<text x="1800" y="363" font-size="14" fill="#ff4040" text-anchor="end" font-weight="bold">24.14</text>
<text x="1894" y="363" font-size="14" fill="#00e000" text-anchor="end" font-weight="bold">2</text>
<text x="1680" y="384" font-size="11.5" fill="#d0d0d0" text-anchor="start" font-weight="normal">:15</text>
<text x="1800" y="385" font-size="14" fill="#ff4040" text-anchor="end" font-weight="bold">24.14</text>
<text x="1894" y="385" font-size="14" fill="#00e000" text-anchor="end" font-weight="bold">1</text>
<text x="1680" y="406" font-size="11.5" fill="#d0d0d0" text-anchor="start" font-weight="normal">:20</text>
<text x="1800" y="407" font-size="14" fill="#ff4040" text-anchor="end" font-weight="bold">24.14</text>
<text x="1894" y="407" font-size="14" fill="#00e000" text-anchor="end" font-weight="bold">1</text>
<text x="1680" y="428" font-size="11.5" fill="#d0d0d0" text-anchor="start" font-weight="normal">:21</text>
<text x="1800" y="429" font-size="14" fill="#ff4040" text-anchor="end" font-weight="bold">24.14</text>
<text x="1894" y="429" font-size="14" fill="#00e000" text-anchor="end" font-weight="bold">1</text>
<text x="1680" y="450" font-size="11.5" fill="#d0d0d0" text-anchor="start" font-weight="normal">:23</text>
<text x="1800" y="451" font-size="14" fill="#ff4040" text-anchor="end" font-weight="bold">24.15</text>
<text x="1894" y="451" font-size="14" fill="#fff" text-anchor="end" font-weight="bold">0</text>
<text x="1680" y="472" font-size="11.5" fill="#d0d0d0" text-anchor="start" font-weight="normal">:24</text>
<text x="1800" y="473" font-size="14" fill="#ff4040" text-anchor="end" font-weight="bold">24.15</text>
<text x="1894" y="473" font-size="14" fill="#ff4040" text-anchor="end" font-weight="bold">10</text>
<text x="1680" y="494" font-size="11.5" fill="#d0d0d0" text-anchor="start" font-weight="normal">:29</text>
<text x="1800" y="495" font-size="14" fill="#ff4040" text-anchor="end" font-weight="bold">24.15</text>
<text x="1894" y="495" font-size="14" fill="#ff4040" text-anchor="end" font-weight="bold">7</text>
<text x="1680" y="516" font-size="11.5" fill="#d0d0d0" text-anchor="start" font-weight="normal">:32</text>
<text x="1800" y="517" font-size="14" fill="#ff4040" text-anchor="end" font-weight="bold">24.14</text>
<text x="1894" y="517" font-size="14" fill="#fff" text-anchor="end" font-weight="bold">0</text>
<text x="1680" y="538" font-size="11.5" fill="#d0d0d0" text-anchor="start" font-weight="normal">:34</text>
<text x="1800" y="539" font-size="14" fill="#ff4040" text-anchor="end" font-weight="bold">24.14</text>
<text x="1894" y="539" font-size="14" fill="#00e000" text-anchor="end" font-weight="bold">15</text>
<text x="1680" y="560" font-size="11.5" fill="#d0d0d0" text-anchor="start" font-weight="normal">:34</text>
<text x="1800" y="561" font-size="14" fill="#ff4040" text-anchor="end" font-weight="bold">24.14</text>
<text x="1894" y="561" font-size="14" fill="#00e000" text-anchor="end" font-weight="bold">10</text>
<text x="1680" y="582" font-size="11.5" fill="#d0d0d0" text-anchor="start" font-weight="normal">:38</text>
<text x="1800" y="583" font-size="14" fill="#ff4040" text-anchor="end" font-weight="bold">24.14</text>
<text x="1894" y="583" font-size="14" fill="#ff4040" text-anchor="end" font-weight="bold">5</text>
<text x="1680" y="604" font-size="11.5" fill="#d0d0d0" text-anchor="start" font-weight="normal">:42</text>
<text x="1800" y="605" font-size="14" fill="#ff4040" text-anchor="end" font-weight="bold">24.14</text>
<text x="1894" y="605" font-size="14" fill="#00e000" text-anchor="end" font-weight="bold">1</text>
<text x="1680" y="626" font-size="11.5" fill="#d0d0d0" text-anchor="start" font-weight="normal">:44</text>
<text x="1800" y="627" font-size="14" fill="#ff4040" text-anchor="end" font-weight="bold">24.13</text>
<text x="1894" y="627" font-size="14" fill="#00e000" text-anchor="end" font-weight="bold">2</text>
<text x="1680" y="648" font-size="11.5" fill="#d0d0d0" text-anchor="start" font-weight="normal">:45</text>
<text x="1800" y="649" font-size="14" fill="#ff4040" text-anchor="end" font-weight="bold">24.13</text>
<text x="1894" y="649" font-size="14" fill="#00e000" text-anchor="end" font-weight="bold">2</text>
<text x="1680" y="670" font-size="11.5" fill="#d0d0d0" text-anchor="start" font-weight="normal">:45</text>
<text x="1800" y="671" font-size="14" fill="#ff4040" text-anchor="end" font-weight="bold">24.13</text>
<text x="1894" y="671" font-size="14" fill="#00e000" text-anchor="end" font-weight="bold">5</text>
<text x="1680" y="692" font-size="11.5" fill="#d0d0d0" text-anchor="start" font-weight="normal">:48</text>
<text x="1800" y="693" font-size="14" fill="#ff4040" text-anchor="end" font-weight="bold">24.14</text>
<text x="1894" y="693" font-size="14" fill="#fff" text-anchor="end" font-weight="bold">0</text>
<text x="1680" y="714" font-size="11.5" fill="#d0d0d0" text-anchor="start" font-weight="normal">:48</text>
<text x="1800" y="715" font-size="14" fill="#ff4040" text-anchor="end" font-weight="bold">24.14</text>
<text x="1894" y="715" font-size="14" fill="#00e000" text-anchor="end" font-weight="bold">4</text>
<text x="1680" y="736" font-size="11.5" fill="#d0d0d0" text-anchor="start" font-weight="normal">:51</text>
<text x="1800" y="737" font-size="14" fill="#ff4040" text-anchor="end" font-weight="bold">24.15</text>
<text x="1894" y="737" font-size="14" fill="#ff4040" text-anchor="end" font-weight="bold">5</text>
<text x="1680" y="758" font-size="11.5" fill="#d0d0d0" text-anchor="start" font-weight="normal">:52</text>
<text x="1800" y="759" font-size="14" fill="#ff4040" text-anchor="end" font-weight="bold">24.14</text>
<text x="1894" y="759" font-size="14" fill="#00e000" text-anchor="end" font-weight="bold">18</text>
<text x="1680" y="780" font-size="11.5" fill="#d0d0d0" text-anchor="start" font-weight="normal">:53</text>
<text x="1800" y="781" font-size="14" fill="#ff4040" text-anchor="end" font-weight="bold">24.14</text>
<text x="1894" y="781" font-size="14" fill="#00e000" text-anchor="end" font-weight="bold">12</text>
<text x="1680" y="802" font-size="11.5" fill="#d0d0d0" text-anchor="start" font-weight="normal">:55</text>
<text x="1800" y="803" font-size="14" fill="#ff4040" text-anchor="end" font-weight="bold">24.14</text>
<text x="1894" y="803" font-size="14" fill="#00e000" text-anchor="end" font-weight="bold">10</text>
<text x="1680" y="824" font-size="11.5" fill="#d0d0d0" text-anchor="start" font-weight="normal">:55</text>
<text x="1800" y="825" font-size="14" fill="#ff4040" text-anchor="end" font-weight="bold">24.14</text>
<text x="1894" y="825" font-size="14" fill="#00e000" text-anchor="end" font-weight="bold">2</text>
<text x="1680" y="846" font-size="11.5" fill="#d0d0d0" text-anchor="start" font-weight="normal">:56</text>
<text x="1800" y="847" font-size="14" fill="#ff4040" text-anchor="end" font-weight="bold">24.15</text>
<text x="1894" y="847" font-size="14" fill="#ff4040" text-anchor="end" font-weight="bold">1</text>
<text x="1680" y="868" font-size="11.5" fill="#d0d0d0" text-anchor="start" font-weight="normal">:58</text>
<text x="1800" y="869" font-size="14" fill="#ff4040" text-anchor="end" font-weight="bold">24.15</text>
<text x="1894" y="869" font-size="14" fill="#ff4040" text-anchor="end" font-weight="bold">7</text>
<text x="1680" y="890" font-size="11.5" fill="#d0d0d0" text-anchor="start" font-weight="normal">:58</text>
<text x="1800" y="891" font-size="14" fill="#ff4040" text-anchor="end" font-weight="bold">24.14</text>
<text x="1894" y="891" font-size="14" fill="#00e000" text-anchor="end" font-weight="bold">23</text>
<text x="1680" y="912" font-size="11.5" fill="#d0d0d0" text-anchor="start" font-weight="normal">:59</text>
<text x="1800" y="913" font-size="14" fill="#ff4040" text-anchor="end" font-weight="bold">24.14</text>
<text x="1894" y="913" font-size="14" fill="#00e000" text-anchor="end" font-weight="bold">21</text>
<text x="1663" y="935" font-size="14" fill="#fff" text-anchor="start" font-weight="bold">01:00</text>
<text x="1800" y="935" font-size="14" fill="#ff4040" text-anchor="end" font-weight="bold">24.14</text>
<text x="1894" y="935" font-size="14" fill="#00e000" text-anchor="end" font-weight="bold">1</text>
<line x1="1658" y1="945.5" x2="1898" y2="945.5" stroke="#c81e1e" stroke-width="1" shape-rendering="crispEdges"/>
<path d="M1657.5 945 V957.5 Q1657.5 960.5 1660.5 960.5 H1691.5 Q1694.5 960.5 1694.5 957.5 V948.5 Q1694.5 945.5 1697.5 945.5" fill="#000" stroke="#c81e1e" stroke-width="1"/>
<line x1="1658" y1="945.5" x2="1694" y2="945.5" stroke="#000" stroke-width="1" shape-rendering="crispEdges"/>
<text x="1676" y="958" font-size="13" fill="#fff" text-anchor="middle" font-weight="normal">笔</text>
</svg>
</body></html>
